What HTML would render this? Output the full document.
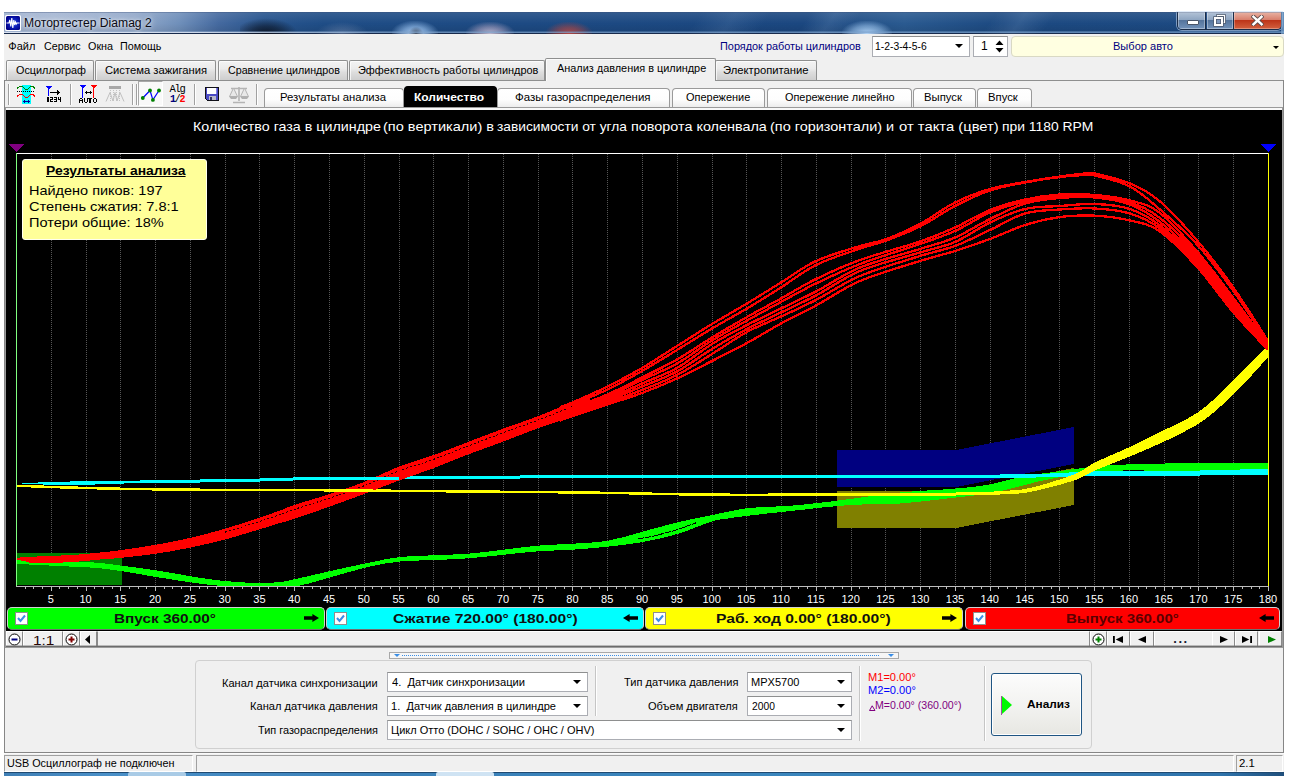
<!DOCTYPE html>
<html><head><meta charset="utf-8"><title>Мотортестер Diamag 2</title>
<style>
*{box-sizing:border-box;margin:0;padding:0}
html,body{width:1296px;height:776px;overflow:hidden;background:#fff}
body{position:relative;font-family:"Liberation Sans",sans-serif;font-size:11px;color:#000}
.abs{position:absolute}
#win{position:absolute;left:4px;top:12px;width:1280px;height:760px;background:#f0f0f0}
#title{position:absolute;left:4px;top:12px;width:1280px;height:22px;
 background:linear-gradient(90deg,#9fb1cf 0px,#a6b7d3 50px,#93a9ca 130px,#6f8fba 175px,#44699f 215px,#28558e 260px,#1f4d86 320px,#1d4a83 520px,#1b4780 800px,#2a5a90 900px,#1c4981 1000px,#1d4a82 1280px);border-bottom:1px solid #172a4c}
#title .glow{position:absolute;left:0;top:0;width:100%;height:100%;background:linear-gradient(180deg,rgba(255,255,255,.10) 0,rgba(255,255,255,0) 55%,rgba(0,0,0,.10) 100%)}
#ttext{position:absolute;left:21px;top:3px;font-size:12.5px;color:#0a0a14;white-space:nowrap;letter-spacing:.1px;text-shadow:0 0 6px rgba(255,255,255,.9),0 0 3px rgba(255,255,255,.7)}
.menu{position:absolute;top:40px;font-size:11px;white-space:nowrap;color:#000}
.tab{position:absolute;top:60px;height:20px;border:1px solid #8e8f8f;border-bottom:none;border-radius:2px 2px 0 0;box-shadow:inset 1px 1px 0 rgba(255,255,255,.7);
 background:linear-gradient(180deg,#f3f3f3 0,#ebebeb 40%,#dddddd 60%,#cecece 100%);font-size:12px;text-align:center;line-height:18px;white-space:nowrap}
.tab.sel{top:58px;height:23px;background:#f0f0f0;line-height:20px;z-index:3}
.itab{position:absolute;top:88px;height:19px;border:1px solid #9a9a9a;border-bottom:none;border-radius:4px 4px 0 0;
 background:linear-gradient(180deg,#fff 0,#fdfdfd 60%,#ededed 100%);font-size:12px;text-align:center;line-height:18px;white-space:nowrap}
.itab.sel{top:86px;height:21px;background:#000;color:#fff;font-weight:bold;border-color:#000;line-height:20px;font-size:12px}
.tsep{position:absolute;top:84px;width:2px;height:21px;border-left:1px solid #a0a0a0;border-right:1px solid #fff}
.tl{position:absolute;top:593px;width:30px;text-align:center;font-size:11px;color:#fff;line-height:12px}
.bar{position:absolute;top:607px;height:23px;border-radius:5px;border:1px solid #d0d0d0;border-bottom-color:#707070;font-weight:bold;font-size:14px;text-align:center;line-height:20px;white-space:nowrap;color:#101010}
.cb{position:absolute;top:4px;left:7px;width:13px;height:13px;background:#fff;border:1px solid #8e8f8f;line-height:0;font-size:0}.cb svg{display:block}
.arr{position:absolute;top:4px}
.sb{position:absolute;top:631px;height:16px;background:#f0f0f0;border:1px solid;border-color:#fff #8a8a8a #8a8a8a #fff}
.combo{position:absolute;height:20px;background:#fff;border:1px solid #abadb3;border-top-color:#8e8f8f;font-size:11px;line-height:17px;padding-left:4px;white-space:nowrap;overflow:hidden}
.combo:after{content:"";position:absolute;right:6px;top:7px;border:4px solid transparent;border-top:4px solid #000;border-bottom:none}
.lbl{position:absolute;font-size:11px;white-space:nowrap;text-align:right}
.vsep{position:absolute;width:2px;border-left:1px solid #c5c5c5;border-right:1px solid #fff}
</style></head><body>
<div id="win"></div>
<!-- title bar -->
<div id="title"><div class="glow"></div>
 <svg class="abs" style="left:0.500px;top:3px" width="16" height="16" viewBox="0 0 16 16"><rect x="0" y="0" width="16" height="16" rx="1.5" fill="#fff"/><defs><radialGradient id="ig" cx="55%" cy="50%" r="60%"><stop offset="0" stop-color="#2a4ae0"/><stop offset="0.6" stop-color="#0a18b0"/><stop offset="1" stop-color="#000088"/></radialGradient></defs><rect x="1" y="1" width="14" height="14" rx="1.500" fill="url(#ig)"/><path d="M1.5,8 H4 L4.8,5 L5.8,11.5 L6.8,3 L7.8,13 L8.8,5 L9.7,10 L10.5,7 L11.3,9 L12,8 H14.5" fill="none" stroke="#fff" stroke-width="1.1"/></svg>
 
 <!-- background blurred shapes -->
 <div class="abs" style="left:236px;top:6px;width:58px;height:16px;background:radial-gradient(ellipse at 45% 100%,rgba(8,12,22,.85) 0,rgba(8,12,22,.5) 35%,rgba(8,12,22,0) 70%)"></div>
 <div class="abs" style="left:312px;top:10px;width:52px;height:12px;background:radial-gradient(ellipse at 50% 100%,rgba(120,140,175,.55) 0,rgba(120,140,175,0) 72%)"></div>
 <div class="abs" style="left:388px;top:9px;width:46px;height:13px;background:radial-gradient(ellipse at 50% 100%,rgba(185,215,250,.95) 0,rgba(160,200,245,.6) 40%,rgba(160,200,245,0) 75%)"></div>
 <div class="abs" style="left:405px;top:15px;width:14px;height:7px;background:radial-gradient(ellipse at 50% 100%,rgba(20,25,40,.7) 0,rgba(20,25,40,0) 75%)"></div>
 <div class="abs" style="left:462px;top:10px;width:48px;height:12px;background:radial-gradient(ellipse at 50% 100%,rgba(215,205,225,.85) 0,rgba(200,180,205,.5) 40%,rgba(200,180,205,0) 75%)"></div>
 <div class="abs" style="left:542px;top:10px;width:46px;height:12px;background:radial-gradient(ellipse at 50% 100%,rgba(205,75,65,.85) 0,rgba(190,70,60,.5) 40%,rgba(190,70,60,0) 75%)"></div>
 <div class="abs" style="left:838px;top:9px;width:50px;height:13px;background:radial-gradient(ellipse at 50% 100%,rgba(185,220,255,.95) 0,rgba(170,210,250,.5) 45%,rgba(180,215,255,0) 75%)"></div>
 <div class="abs" style="left:985px;top:0;width:60px;height:22px;transform:skewX(-35deg);background:linear-gradient(90deg,rgba(255,255,255,0),rgba(160,190,225,.16) 50%,rgba(255,255,255,0))"></div>
 <div class="abs" style="left:690px;top:0;width:70px;height:22px;transform:skewX(-35deg);background:linear-gradient(90deg,rgba(255,255,255,0),rgba(160,190,225,.12) 50%,rgba(255,255,255,0))"></div>
 <div class="abs" style="left:800px;top:0;width:50px;height:22px;transform:skewX(-35deg);background:linear-gradient(90deg,rgba(255,255,255,0),rgba(160,190,225,.14) 50%,rgba(255,255,255,0))"></div>
 <!-- window buttons -->
 <div class="abs" style="left:1173px;top:0;width:105px;height:18px;border:1px solid #1a2c48;border-top:none;border-radius:0 0 5px 5px;overflow:hidden;box-shadow:0 0 0 1px rgba(200,220,245,.55)">
  <div class="abs" style="left:0;top:0;width:28px;height:17px;background:linear-gradient(180deg,#b4c4d8 0,#8fa6c2 45%,#55749c 50%,#7292ba 100%);border-right:1px solid #1a2c48;box-shadow:inset 0 0 0 1px rgba(255,255,255,.35)"></div>
  <div class="abs" style="left:29px;top:0;width:27px;height:17px;background:linear-gradient(180deg,#b4c4d8 0,#8fa6c2 45%,#55749c 50%,#7292ba 100%);border-right:1px solid #1a2c48;box-shadow:inset 0 0 0 1px rgba(255,255,255,.35)"></div>
  <div class="abs" style="left:56px;top:0;width:48px;height:17px;background:linear-gradient(180deg,#e9b4a6 0,#d8806e 45%,#bd3519 50%,#d3613f 100%);box-shadow:inset 0 0 0 1px rgba(255,255,255,.3)"></div>
  <div class="abs" style="left:9px;top:8px;width:12px;height:5px;background:#fff;border:1px solid #4a5568;border-radius:1px"></div>
  <svg class="abs" style="left:35px;top:2px" width="13" height="13" viewBox="0 0 13 13"><rect x="4.500" y="1.5" width="7" height="7" fill="none" stroke="#4a5568" stroke-width="2.6"/><rect x="4.500" y="1.5" width="7" height="7" fill="none" stroke="#fff" stroke-width="1.2"/><rect x="2" y="4" width="7" height="7" fill="#7e98bd" stroke="#4a5568" stroke-width="3.4"/><rect x="2" y="4" width="7" height="7" fill="none" stroke="#fff" stroke-width="2"/></svg>
  <svg class="abs" style="left:73px;top:3px" width="13" height="11" viewBox="0 0 13 11"><path d="M2.500,1.800 L10.500,9.200 M10.500,1.800 L2.500,9.200" stroke="#5a4a4a" stroke-width="4.200" stroke-linecap="square"/><path d="M2.500,1.800 L10.500,9.200 M10.500,1.800 L2.500,9.200" stroke="#fff" stroke-width="2.500" stroke-linecap="square"/></svg>
 </div>
 <div class="abs" style="left:0;top:19px;width:1280px;height:1px;background:linear-gradient(90deg,rgba(170,190,220,.5),rgba(110,150,195,.35) 40%,rgba(120,160,205,.5))"></div><div class="abs" style="left:0;top:20px;width:1280px;height:1px;background:linear-gradient(90deg,rgba(225,232,245,.9),rgba(215,225,242,.9) 15%,rgba(130,165,205,.7) 30%,rgba(120,160,205,.7))"></div><div class="abs" style="left:0;top:0;width:1280px;height:1px;background:rgba(60,80,120,.35)"></div>
 <div class="abs" style="left:1277px;top:0;width:3px;height:22px;background:rgba(130,170,210,.7)"></div>
</div>
<!-- menu -->
<span style="position:absolute;white-space:nowrap;display:inline-block;transform-origin:0 50%;transform:scaleX(0.9859);left:24.41px;top:14.5px;font-size:12.3px;line-height:16px;letter-spacing:0.000px;color:#0a0a14;text-shadow:0 0 6px rgba(255,255,255,.9),0 0 3px rgba(255,255,255,.7);z-index:5">Мотортестер Diamag 2</span>
<span style="position:absolute;white-space:nowrap;display:inline-block;transform-origin:0 50%;transform:scaleX(1.0000);left:8.30px;top:39.1px;font-size:11px;line-height:15px;letter-spacing:0.000px;">Файл</span>
<span style="position:absolute;white-space:nowrap;display:inline-block;transform-origin:0 50%;transform:scaleX(0.9730);left:43.50px;top:39.1px;font-size:11px;line-height:15px;letter-spacing:0.000px;">Сервис</span>
<span style="position:absolute;white-space:nowrap;display:inline-block;transform-origin:0 50%;transform:scaleX(0.9808);left:87.50px;top:39.1px;font-size:11px;line-height:15px;letter-spacing:0.000px;">Окна</span>
<span style="position:absolute;white-space:nowrap;display:inline-block;transform-origin:0 50%;transform:scaleX(0.9756);left:120.02px;top:39.1px;font-size:11px;line-height:15px;letter-spacing:0.000px;">Помощь</span>
<span style="position:absolute;white-space:nowrap;display:inline-block;transform-origin:0 50%;transform:scaleX(0.9894);left:719.51px;top:39.1px;font-size:11px;line-height:15px;letter-spacing:0.000px;color:#000080;">Порядок работы цилиндров</span>
<div class="combo" style="left:872px;top:36px;width:98px;height:21px"></div><span style="position:absolute;white-space:nowrap;display:inline-block;transform-origin:0 50%;transform:scaleX(0.9398);left:874.56px;top:39.1px;font-size:11px;line-height:15px;letter-spacing:0.000px;">1-2-3-4-5-6</span>
<div class="abs" style="left:973px;top:36px;width:35px;height:21px;background:#fff;border:1px solid #abadb3;border-top-color:#8e8f8f;font-size:12px;line-height:18px;padding-left:7px">
 <svg class="abs" style="left:21px;top:2px" width="9" height="15" viewBox="0 0 9 15"><path d="M0.5,6 L4.5,1.5 L8.5,6 Z M0.5,9 L4.5,13.5 L8.5,9 Z" fill="#000"/></svg></div>
<div class="abs" style="left:1011px;top:36px;width:273px;height:21px;background:#ffffe1;border:1px solid #d9d9c4;border-radius:4px">
 <div class="abs" style="right:4px;top:9px;border:3px solid transparent;border-top:3px solid #000;border-bottom:none"></div></div>

<span class="abs" style="left:981px;top:38px;font-size:12px;line-height:16px">1</span>
<span style="position:absolute;white-space:nowrap;display:inline-block;transform-origin:0 50%;transform:scaleX(1.0043);left:1112.75px;top:39.1px;font-size:11px;line-height:15px;letter-spacing:-0.000px;color:#000080;">Выбор авто</span>
<!-- main tabs -->
<div class="abs" style="left:4px;top:80px;width:1280px;height:1px;background:#8e8f8f;z-index:2"></div>
<div class="abs" style="left:1282px;top:108px;width:1px;height:540px;background:#9a9a9a;z-index:6"></div><div class="abs" style="left:1283px;top:80px;width:1px;height:673px;background:#868686;z-index:6"></div>
<div class="abs" style="left:4px;top:80px;width:1px;height:673px;background:#868686;z-index:6"></div><div class="abs" style="left:5px;top:108px;width:1px;height:540px;background:#9a9a9a;z-index:6"></div>
<div class="tab" style="left:6px;width:88px"></div><span style="position:absolute;white-space:nowrap;display:inline-block;transform-origin:0 50%;transform:scaleX(0.9857);left:16.00px;top:62.8px;font-size:11px;line-height:15px;letter-spacing:0.000px;color:#000;z-index:4">Осциллограф</span>
<div class="tab" style="left:95px;width:121px"></div><span style="position:absolute;white-space:nowrap;display:inline-block;transform-origin:0 50%;transform:scaleX(1.0200);left:105.00px;top:62.8px;font-size:11px;line-height:15px;letter-spacing:0.000px;color:#000;z-index:4">Система зажигания</span>
<div class="tab" style="left:218px;width:130px"></div><span style="position:absolute;white-space:nowrap;display:inline-block;transform-origin:0 50%;transform:scaleX(0.9717);left:227.50px;top:62.8px;font-size:11px;line-height:15px;letter-spacing:0.000px;color:#000;z-index:4">Сравнение цилиндров</span>
<div class="tab" style="left:349px;width:196px"></div><span style="position:absolute;white-space:nowrap;display:inline-block;transform-origin:0 50%;transform:scaleX(0.9931);left:357.76px;top:62.8px;font-size:11px;line-height:15px;letter-spacing:0.000px;color:#000;z-index:4">Эффективность работы цилиндров</span>
<div class="tab sel" style="left:545px;width:171px"></div><span style="position:absolute;white-space:nowrap;display:inline-block;transform-origin:0 50%;transform:scaleX(0.9900);left:557.00px;top:60.6px;font-size:11px;line-height:15px;letter-spacing:0.000px;color:#000;z-index:4">Анализ давления в цилиндре</span>
<div class="tab" style="left:715px;width:102px"></div><span style="position:absolute;white-space:nowrap;display:inline-block;transform-origin:0 50%;transform:scaleX(1.0213);left:722.73px;top:62.8px;font-size:11px;line-height:15px;letter-spacing:0.000px;color:#000;z-index:4">Электропитание</span>

<!-- toolbar -->
<div id="toolbar">
<div class="tsep" style="left:8px"></div>
<div class="tsep" style="left:70px"></div>
<div class="tsep" style="left:132px"></div>
<div class="tsep" style="left:136px"></div>
<div class="tsep" style="left:194px"></div>
<div class="tsep" style="left:256px"></div>
<div class="abs" style="left:138px;top:81px;width:25px;height:25px;background:#f9f9f9;border:1px solid;border-color:#a8a8a8 #fff #fff #a8a8a8"></div>
<svg class="abs" style="left:6px;top:81px" width="256" height="26" viewBox="6 81 256 26">
<g shape-rendering="crispEdges">
<!-- icon1 -->
<rect x="22" y="85" width="9" height="19" fill="#00ffff"/>
<path d="M17,88.500 L19.500,86.500 L22.500,86.500 L25.500,89.500 L27.500,89.500 L30.500,86.500 L33,86.500 L35,88.500" fill="none" stroke="#008000" stroke-width="1"/>
<path d="M17,96.500 L19.500,94.500 L22.500,94.500 L25.500,97.500 L27.500,97.500 L30.500,94.500 L33,94.500 L35,96.500" fill="none" stroke="#ff0000" stroke-width="1"/>
<path d="M17,91.500 H35" stroke="#000" stroke-width="1" stroke-dasharray="1,1"/>
<path d="M23,101.500 H30" stroke="#0000a0" stroke-width="1"/><path d="M24.500,100 V103 M28.500,100 V103 M23.500,101 V102 M29.500,101 V102" stroke="#0000a0" stroke-width="1"/>
<!-- icon2 -->
<polygon points="45,86 52,86 48.500,89.500" fill="#0000ff"/><rect x="48" y="86" width="1" height="10" fill="#0000ff"/>
<rect x="50" y="92" width="9" height="1" fill="#000"/><polygon points="57,90 60,92.500 57,95" fill="#000"/>
<rect x="46.60" y="97.00" width="2.00" height="1" fill="#000"/><rect x="46.60" y="98.00" width="2.00" height="1" fill="#000"/><rect x="46.60" y="99.00" width="2.00" height="1" fill="#000"/><rect x="46.60" y="100.00" width="2.00" height="1" fill="#000"/><rect x="46.60" y="101.00" width="2.00" height="1" fill="#000"/><rect x="49.60" y="97.00" width="3.00" height="1" fill="#000"/><rect x="51.60" y="98.00" width="1.00" height="1" fill="#000"/><rect x="49.60" y="99.00" width="3.00" height="1" fill="#000"/><rect x="49.60" y="100.00" width="1.00" height="1" fill="#000"/><rect x="49.60" y="101.00" width="3.00" height="1" fill="#000"/><rect x="53.60" y="97.00" width="3.00" height="1" fill="#000"/><rect x="55.60" y="98.00" width="1.00" height="1" fill="#000"/><rect x="53.60" y="99.00" width="3.00" height="1" fill="#000"/><rect x="55.60" y="100.00" width="1.00" height="1" fill="#000"/><rect x="53.60" y="101.00" width="3.00" height="1" fill="#000"/><rect x="57.60" y="97.00" width="1.00" height="1" fill="#000"/><rect x="59.60" y="97.00" width="1.00" height="1" fill="#000"/><rect x="57.60" y="98.00" width="1.00" height="1" fill="#000"/><rect x="59.60" y="98.00" width="1.00" height="1" fill="#000"/><rect x="57.60" y="99.00" width="3.00" height="1" fill="#000"/><rect x="59.60" y="100.00" width="1.00" height="1" fill="#000"/><rect x="59.60" y="101.00" width="1.00" height="1" fill="#000"/>
<!-- icon3 -->
<polygon points="79,85 86,85 82.500,88.500" fill="#0000ff"/><rect x="82" y="85" width="1" height="13" fill="#0000ff"/>
<polygon points="90,85 97,85 93.500,88.500" fill="#ff0000"/><rect x="93" y="85" width="1" height="13" fill="#ff0000"/>
<rect x="85" y="92" width="7" height="1" fill="#000"/><path d="M86,91 V94 M85,92 V93 M90.500,91 V94" stroke="#000" stroke-width="1"/>
<rect x="79.80" y="98.00" width="2.00" height="1" fill="#000"/><rect x="78.80" y="99.00" width="1.00" height="1" fill="#000"/><rect x="81.80" y="99.00" width="1.00" height="1" fill="#000"/><rect x="78.80" y="100.00" width="4.00" height="1" fill="#000"/><rect x="78.80" y="101.00" width="1.00" height="1" fill="#000"/><rect x="81.80" y="101.00" width="1.00" height="1" fill="#000"/><rect x="78.80" y="102.00" width="1.00" height="1" fill="#000"/><rect x="81.80" y="102.00" width="1.00" height="1" fill="#000"/><rect x="83.50" y="98.00" width="1.00" height="1" fill="#000"/><rect x="86.50" y="98.00" width="1.00" height="1" fill="#000"/><rect x="83.50" y="99.00" width="1.00" height="1" fill="#000"/><rect x="86.50" y="99.00" width="1.00" height="1" fill="#000"/><rect x="83.50" y="100.00" width="1.00" height="1" fill="#000"/><rect x="86.50" y="100.00" width="1.00" height="1" fill="#000"/><rect x="83.50" y="101.00" width="1.00" height="1" fill="#000"/><rect x="86.50" y="101.00" width="1.00" height="1" fill="#000"/><rect x="84.50" y="102.00" width="2.00" height="1" fill="#000"/><rect x="88.20" y="98.00" width="4.00" height="1" fill="#000"/><rect x="89.20" y="99.00" width="2.00" height="1" fill="#000"/><rect x="89.20" y="100.00" width="2.00" height="1" fill="#000"/><rect x="89.20" y="101.00" width="2.00" height="1" fill="#000"/><rect x="89.20" y="102.00" width="2.00" height="1" fill="#000"/><rect x="93.90" y="98.00" width="2.00" height="1" fill="#000"/><rect x="92.90" y="99.00" width="1.00" height="1" fill="#000"/><rect x="95.90" y="99.00" width="1.00" height="1" fill="#000"/><rect x="92.90" y="100.00" width="1.00" height="1" fill="#000"/><rect x="95.90" y="100.00" width="1.00" height="1" fill="#000"/><rect x="92.90" y="101.00" width="1.00" height="1" fill="#000"/><rect x="95.90" y="101.00" width="1.00" height="1" fill="#000"/><rect x="93.90" y="102.00" width="2.00" height="1" fill="#000"/>
<!-- icon4 -->
<rect x="109" y="86" width="12" height="3" fill="#a8a8a8"/>
</g>
<path d="M106,101.500 L110,92.500 L113,101 L115,92.500 L117,101 L120,92.500 L124,101.500" fill="none" stroke="#c0c0c0" stroke-width="1"/>
<path d="M110.500,90 V101 M113.500,90 V101 M116.500,90 V101 M119.500,90 V101" stroke="#c4c4c4" stroke-width="1" stroke-dasharray="1,1"/>
<!-- icon5 zigzag -->
<path d="M142.800,98 L150,90.500 L152.900,99.900 L159,90.500" fill="none" stroke="#0000ff" stroke-width="1.2"/>
<circle cx="142.800" cy="98" r="1.900" fill="#008000"/><circle cx="150" cy="90.500" r="1.900" fill="#008000"/><circle cx="152.900" cy="99.900" r="1.900" fill="#008000"/><circle cx="159" cy="90.500" r="1.900" fill="#008000"/>
<!-- icon7 floppy -->
<g shape-rendering="crispEdges">
<path d="M205,87 H219 V101 H207 L205,99 Z" fill="#101018"/>
<path d="M206,88 H218 V100 H207.500 L206,98.500 Z" fill="#4a4ac4"/>
<rect x="207" y="88" width="9" height="6" fill="#fff"/>
<rect x="216" y="88" width="1" height="6" fill="#8080e0"/>
<rect x="209" y="96" width="7" height="4" fill="#b8b8c8"/><rect x="210" y="97" width="2" height="3" fill="#303060"/>
</g>
<!-- icon8 scales -->
<path d="M239,87 V101 M233,102.500 H245 M231,88.500 H247" stroke="#b4b4b4" stroke-width="1.6" fill="none"/>
<path d="M233.500,88 L229.500,96.500 H237.500 Z M244.500,88 L240.500,96.500 H248.500 Z" fill="#e8e8e8" stroke="#b4b4b4" stroke-width="1"/>
<path d="M229,96.500 H238 L236,99 H231 Z M240,96.500 H249 L247,99 H242 Z" fill="#b0b0b0"/>
</svg>
<!-- icon6 Alg 1/2 -->
<div class="abs" style="left:169.500px;top:84px;font-family:'Liberation Mono',monospace;font-size:10.5px;line-height:11px;letter-spacing:-1.3px;white-space:nowrap;color:#000">Alg</div>
<div class="abs" style="left:170px;top:94px;font-family:'Liberation Mono',monospace;font-size:10px;line-height:11px;letter-spacing:-1.300px;white-space:nowrap;color:#000;font-weight:bold"><span style="color:#000080">1</span><span style="font-weight:normal">/</span><span style="color:#ff0000">2</span></div>
</div>

<!-- inner tabs -->
<div class="abs" style="left:5px;top:107px;width:1278px;height:1px;background:#9a9a9a"></div>
<div class="abs" style="left:5px;top:108px;width:1278px;height:2px;background:#f8f8f8"></div>
<div class="itab" style="left:264px;width:140px"></div><span style="position:absolute;white-space:nowrap;display:inline-block;transform-origin:0 50%;transform:scaleX(1.0294);left:280.22px;top:90.3px;font-size:11px;line-height:15px;letter-spacing:0.000px;">Результаты анализа</span>
<div class="itab sel" style="left:404px;width:93px"></div><span style="position:absolute;white-space:nowrap;display:inline-block;transform-origin:0 50%;transform:scaleX(1.0913);left:414.41px;top:89.5px;font-size:11px;line-height:15px;letter-spacing:0.000px;font-weight:bold;color:#fff;">Количество</span>
<div class="itab" style="left:497px;width:173px"></div><span style="position:absolute;white-space:nowrap;display:inline-block;transform-origin:0 50%;transform:scaleX(1.0449);left:515.21px;top:90.3px;font-size:11px;line-height:15px;letter-spacing:0.000px;">Фазы газораспределения</span>
<div class="itab" style="left:672px;width:93px"></div><span style="position:absolute;white-space:nowrap;display:inline-block;transform-origin:0 50%;transform:scaleX(0.9961);left:686.25px;top:90.3px;font-size:11px;line-height:15px;letter-spacing:0.000px;">Опережение</span>
<div class="itab" style="left:767px;width:145px"></div><span style="position:absolute;white-space:nowrap;display:inline-block;transform-origin:0 50%;transform:scaleX(0.9886);left:784.50px;top:90.3px;font-size:11px;line-height:15px;letter-spacing:0.000px;">Опережение линейно</span>
<div class="itab" style="left:913px;width:63px"></div><span style="position:absolute;white-space:nowrap;display:inline-block;transform-origin:0 50%;transform:scaleX(1.0278);left:924.47px;top:90.3px;font-size:11px;line-height:15px;letter-spacing:0.000px;">Выпуск</span>
<div class="itab" style="left:977px;width:55px"></div><span style="position:absolute;white-space:nowrap;display:inline-block;transform-origin:0 50%;transform:scaleX(1.0268);left:987.72px;top:90.3px;font-size:11px;line-height:15px;letter-spacing:0.000px;">Впуск</span>

<!-- chart frame -->

<svg id="chart" width="1276" height="521" viewBox="6 110 1276 521" style="position:absolute;left:6px;top:110px" shape-rendering="crispEdges">
<rect x="6" y="110" width="1276" height="521" fill="#000"/>
<line x1="51.5" y1="154" x2="51.5" y2="586" stroke="#565656" stroke-width="1" stroke-dasharray="1,1"/>
<line x1="86.5" y1="154" x2="86.5" y2="586" stroke="#565656" stroke-width="1" stroke-dasharray="1,1"/>
<line x1="120.5" y1="154" x2="120.5" y2="586" stroke="#565656" stroke-width="1" stroke-dasharray="1,1"/>
<line x1="155.5" y1="154" x2="155.5" y2="586" stroke="#565656" stroke-width="1" stroke-dasharray="1,1"/>
<line x1="190.5" y1="154" x2="190.5" y2="586" stroke="#565656" stroke-width="1" stroke-dasharray="1,1"/>
<line x1="225.5" y1="154" x2="225.5" y2="586" stroke="#565656" stroke-width="1" stroke-dasharray="1,1"/>
<line x1="259.5" y1="154" x2="259.5" y2="586" stroke="#565656" stroke-width="1" stroke-dasharray="1,1"/>
<line x1="294.5" y1="154" x2="294.5" y2="586" stroke="#565656" stroke-width="1" stroke-dasharray="1,1"/>
<line x1="329.5" y1="154" x2="329.5" y2="586" stroke="#565656" stroke-width="1" stroke-dasharray="1,1"/>
<line x1="364.5" y1="154" x2="364.5" y2="586" stroke="#565656" stroke-width="1" stroke-dasharray="1,1"/>
<line x1="399.5" y1="154" x2="399.5" y2="586" stroke="#565656" stroke-width="1" stroke-dasharray="1,1"/>
<line x1="433.5" y1="154" x2="433.5" y2="586" stroke="#565656" stroke-width="1" stroke-dasharray="1,1"/>
<line x1="468.5" y1="154" x2="468.5" y2="586" stroke="#565656" stroke-width="1" stroke-dasharray="1,1"/>
<line x1="503.5" y1="154" x2="503.5" y2="586" stroke="#565656" stroke-width="1" stroke-dasharray="1,1"/>
<line x1="538.5" y1="154" x2="538.5" y2="586" stroke="#565656" stroke-width="1" stroke-dasharray="1,1"/>
<line x1="572.5" y1="154" x2="572.5" y2="586" stroke="#565656" stroke-width="1" stroke-dasharray="1,1"/>
<line x1="607.5" y1="154" x2="607.5" y2="586" stroke="#565656" stroke-width="1" stroke-dasharray="1,1"/>
<line x1="642.5" y1="154" x2="642.5" y2="586" stroke="#565656" stroke-width="1" stroke-dasharray="1,1"/>
<line x1="677.5" y1="154" x2="677.5" y2="586" stroke="#565656" stroke-width="1" stroke-dasharray="1,1"/>
<line x1="712.5" y1="154" x2="712.5" y2="586" stroke="#565656" stroke-width="1" stroke-dasharray="1,1"/>
<line x1="746.5" y1="154" x2="746.5" y2="586" stroke="#565656" stroke-width="1" stroke-dasharray="1,1"/>
<line x1="781.5" y1="154" x2="781.5" y2="586" stroke="#565656" stroke-width="1" stroke-dasharray="1,1"/>
<line x1="816.5" y1="154" x2="816.5" y2="586" stroke="#565656" stroke-width="1" stroke-dasharray="1,1"/>
<line x1="851.5" y1="154" x2="851.5" y2="586" stroke="#565656" stroke-width="1" stroke-dasharray="1,1"/>
<line x1="885.5" y1="154" x2="885.5" y2="586" stroke="#565656" stroke-width="1" stroke-dasharray="1,1"/>
<line x1="920.5" y1="154" x2="920.5" y2="586" stroke="#565656" stroke-width="1" stroke-dasharray="1,1"/>
<line x1="955.5" y1="154" x2="955.5" y2="586" stroke="#565656" stroke-width="1" stroke-dasharray="1,1"/>
<line x1="990.5" y1="154" x2="990.5" y2="586" stroke="#565656" stroke-width="1" stroke-dasharray="1,1"/>
<line x1="1025.5" y1="154" x2="1025.5" y2="586" stroke="#565656" stroke-width="1" stroke-dasharray="1,1"/>
<line x1="1059.5" y1="154" x2="1059.5" y2="586" stroke="#565656" stroke-width="1" stroke-dasharray="1,1"/>
<line x1="1094.5" y1="154" x2="1094.5" y2="586" stroke="#565656" stroke-width="1" stroke-dasharray="1,1"/>
<line x1="1129.5" y1="154" x2="1129.5" y2="586" stroke="#565656" stroke-width="1" stroke-dasharray="1,1"/>
<line x1="1164.5" y1="154" x2="1164.5" y2="586" stroke="#565656" stroke-width="1" stroke-dasharray="1,1"/>
<line x1="1198.5" y1="154" x2="1198.5" y2="586" stroke="#565656" stroke-width="1" stroke-dasharray="1,1"/>
<line x1="1233.5" y1="154" x2="1233.5" y2="586" stroke="#565656" stroke-width="1" stroke-dasharray="1,1"/>
<rect x="17" y="553" width="105" height="32" fill="#008000"/>
<polygon points="837,450 956,450 1074,427 1074,464 956,487 837,487" fill="#000080"/>
<polygon points="837,491 956,491 1074,468 1074,505 956,528 837,528" fill="#808000"/>
<path d="M17.0,559.0 C24.2,559.2 46.2,559.8 60.0,560.5 C73.8,561.2 89.7,562.1 100.0,563.0 C110.3,563.9 112.7,564.6 122.0,565.8 C131.3,567.0 142.6,568.3 155.6,570.3 C168.6,572.3 188.4,576.0 200.0,577.8 C211.6,579.6 215.8,580.1 225.0,581.0 C234.2,581.9 245.8,582.8 255.0,583.0 C264.2,583.2 272.5,582.8 280.0,582.0 C287.5,581.2 290.8,580.0 300.0,578.0 C309.2,576.0 323.3,572.6 335.0,570.0 C346.7,567.4 359.2,564.7 370.0,562.5 C380.8,560.3 389.4,558.2 400.0,557.0 C410.6,555.8 422.1,555.8 433.5,555.3 C444.9,554.8 456.8,554.6 468.4,553.7 C480.0,552.8 491.8,551.1 503.4,549.7 C515.0,548.4 526.8,546.6 538.3,545.6 C549.8,544.6 560.9,544.5 572.4,543.7 C583.9,542.9 595.8,542.9 607.5,540.9 C619.2,538.9 630.9,534.8 642.5,531.7 C654.1,528.6 665.8,525.2 677.4,522.4 C689.0,519.6 703.6,516.9 712.4,515.0 C721.2,513.1 723.7,512.5 730.0,511.3 C736.3,510.1 738.3,509.1 750.0,508.0 C761.7,506.9 783.3,506.5 800.0,505.0 C816.7,503.5 833.3,501.1 850.0,499.0 C866.7,496.9 882.3,494.2 900.0,492.5 C917.7,490.8 940.9,489.9 956.0,488.5 C971.1,487.1 979.7,486.3 990.4,484.4 C1001.1,482.5 1010.1,479.0 1020.0,477.0 C1029.9,475.0 1036.7,474.3 1050.0,472.5 C1063.3,470.7 1084.3,467.4 1100.0,466.0 C1115.7,464.6 1127.3,464.5 1144.0,464.0 C1160.7,463.5 1179.3,463.2 1200.0,463.0 C1220.7,462.8 1256.7,463.0 1268.0,463.0 L1268.0,471.0 C1256.7,471.1 1220.7,471.6 1200.0,471.5 C1179.3,471.4 1160.7,470.5 1144.0,470.5 C1127.3,470.5 1115.7,470.1 1100.0,471.5 C1084.3,472.9 1063.3,476.5 1050.0,479.0 C1036.7,481.5 1029.9,483.9 1020.0,486.3 C1010.1,488.7 1001.1,491.3 990.4,493.2 C979.7,495.1 971.1,495.8 956.0,497.5 C940.9,499.2 917.7,502.2 900.0,503.5 C882.3,504.8 866.7,503.9 850.0,505.0 C833.3,506.1 816.7,508.2 800.0,510.0 C783.3,511.8 761.7,514.1 750.0,515.5 C738.3,516.9 736.3,517.2 730.0,518.2 C723.7,519.2 721.2,518.7 712.4,521.3 C703.6,523.9 689.0,530.5 677.4,534.0 C665.8,537.5 654.1,540.0 642.5,542.1 C630.9,544.2 619.2,545.4 607.5,546.7 C595.8,548.0 583.9,548.9 572.4,549.7 C560.9,550.5 549.8,550.4 538.3,551.3 C526.8,552.1 515.0,553.6 503.4,554.8 C491.8,556.0 480.0,557.4 468.4,558.3 C456.8,559.2 444.9,559.6 433.5,560.1 C422.1,560.6 410.6,560.4 400.0,561.5 C389.4,562.6 380.8,564.1 370.0,566.5 C359.2,568.9 346.7,572.8 335.0,576.0 C323.3,579.2 309.2,583.8 300.0,585.5 C290.8,587.2 287.5,585.9 280.0,586.0 C272.5,586.1 264.2,586.0 255.0,586.0 C245.8,586.0 234.2,586.4 225.0,586.0 C215.8,585.6 211.6,585.2 200.0,583.7 C188.4,582.2 168.6,579.0 155.6,576.9 C142.6,574.8 131.3,572.6 122.0,571.2 C112.7,569.8 107.0,569.0 100.0,568.3 C93.0,567.6 86.0,567.3 80.0,567.0 C74.0,566.7 70.7,566.6 64.0,566.3 C57.3,566.0 47.8,565.4 40.0,565.0 C32.2,564.6 20.8,564.2 17.0,564.0 Z" fill="#00ff00"/>
<path d="M638,539 L655,535.8 L677,529.8 L696,522.8" fill="none" stroke="#000" stroke-width="1" stroke-dasharray="6,1"/>
<path d="M17.0,558.0 C18.2,557.8 21.7,557.2 24.0,557.0 C26.3,556.8 26.3,557.0 31.0,556.8 C35.7,556.6 45.0,556.1 52.0,555.8 C59.0,555.5 65.0,555.5 73.0,555.0 C81.0,554.5 92.1,553.3 100.0,552.5 C107.9,551.7 111.1,551.5 120.4,550.2 C129.7,548.9 143.9,546.8 155.6,544.8 C167.2,542.8 178.7,540.6 190.3,537.9 C201.9,535.2 213.8,532.0 225.3,528.6 C236.8,525.2 250.3,520.8 259.4,517.8 C268.5,514.8 274.2,512.6 280.0,510.5 C285.8,508.4 285.7,507.8 294.0,505.0 C302.3,502.2 318.3,497.8 330.0,494.0 C341.7,490.2 352.5,486.6 364.0,482.0 C375.5,477.4 387.3,471.0 399.0,466.5 C410.7,462.0 422.5,459.1 434.0,455.0 C445.5,450.9 456.5,446.4 468.0,442.0 C479.5,437.6 491.3,433.0 503.0,428.7 C514.7,424.4 526.4,420.7 538.0,416.2 C549.6,411.7 563.8,405.5 572.5,401.8 C581.2,398.1 587.1,395.3 590.0,394.0 L590.0,411.0 C587.1,411.9 581.2,413.8 572.5,416.7 C563.8,419.6 549.6,424.1 538.0,428.3 C526.4,432.5 514.7,437.3 503.0,441.7 C491.3,446.1 479.5,450.1 468.0,454.5 C456.5,458.9 445.5,463.7 434.0,468.0 C422.5,472.3 410.7,476.2 399.0,480.5 C387.3,484.8 375.5,489.7 364.0,494.0 C352.5,498.3 341.7,502.3 330.0,506.5 C318.3,510.7 302.3,516.2 294.0,519.0 C285.7,521.8 285.8,521.3 280.0,523.0 C274.2,524.7 268.5,526.7 259.4,529.4 C250.3,532.1 236.8,536.4 225.3,539.4 C213.8,542.4 201.9,545.2 190.3,547.6 C178.7,550.0 167.2,552.1 155.6,553.8 C143.9,555.5 129.7,556.9 120.4,557.9 C111.1,558.9 107.9,558.8 100.0,559.5 C92.1,560.2 81.0,561.5 73.0,562.0 C65.0,562.5 59.0,562.7 52.0,562.8 C45.0,562.9 35.7,563.1 31.0,562.8 C26.3,562.5 26.3,561.5 24.0,561.0 C21.7,560.5 18.2,560.2 17.0,560.0 Z" fill="#ff0000"/>
<path d="M225.3,532.1 C231.0,530.3 250.3,524.4 259.4,521.5 C268.5,518.6 274.2,516.5 280.0,514.5 C285.8,512.5 285.7,512.2 294.0,509.5 C302.3,506.7 318.3,501.9 330.0,498.0 C341.7,494.1 352.5,490.3 364.0,485.8 C375.5,481.3 387.3,475.4 399.0,471.0 C410.7,466.5 422.5,463.3 434.0,459.2 C445.5,455.0 456.5,450.4 468.0,446.0 C479.5,441.6 491.3,437.2 503.0,432.9 C514.7,428.5 526.4,424.5 538.0,420.1 C549.6,415.7 566.8,408.8 572.5,406.6" fill="none" stroke="#200000" stroke-width="1" stroke-dasharray="2,2"/>
<path d="M22.0,483.5 C22.3,483.4 19.2,483.2 24.0,483.0 C28.8,482.8 40.7,482.4 51.0,482.1 C61.3,481.8 74.5,481.3 86.0,481.1 C97.5,480.9 108.5,481.2 120.0,481.0 C131.5,480.8 141.7,480.4 155.0,480.1 C168.3,479.9 182.5,479.8 200.0,479.5 C217.5,479.2 241.7,478.9 260.0,478.5 C278.3,478.1 286.7,477.5 310.0,477.2 C333.3,476.9 368.3,476.8 400.0,476.5 C431.7,476.2 466.7,475.9 500.0,475.7 C533.3,475.4 550.0,475.1 600.0,475.0 C650.0,474.9 733.3,475.1 800.0,475.0 C866.7,474.9 958.3,474.8 1000.0,474.5 C1041.7,474.2 1033.3,474.1 1050.0,473.5 C1066.7,472.9 1081.7,471.5 1100.0,471.0 C1118.3,470.5 1143.3,470.8 1160.0,470.7 C1176.7,470.6 1182.0,470.8 1200.0,470.5 C1218.0,470.2 1256.7,469.0 1268.0,468.7 L1268.0,475.2 C1256.7,475.2 1218.0,475.4 1200.0,475.5 C1182.0,475.6 1176.7,475.8 1160.0,475.8 C1143.3,475.9 1118.3,475.6 1100.0,475.8 C1081.7,476.0 1066.7,476.9 1050.0,477.2 C1033.3,477.5 1041.7,477.6 1000.0,477.7 C958.3,477.8 866.7,477.9 800.0,478.0 C733.3,478.1 650.0,477.9 600.0,478.0 C550.0,478.1 533.3,478.4 500.0,478.7 C466.7,478.9 431.7,479.2 400.0,479.5 C368.3,479.8 333.3,479.9 310.0,480.2 C286.7,480.5 278.3,481.1 260.0,481.5 C241.7,481.9 217.5,482.2 200.0,482.5 C182.5,482.8 168.3,482.8 155.0,483.0 C141.7,483.2 131.5,483.3 120.0,483.6 C108.5,483.9 97.5,484.6 86.0,484.8 C74.5,485.0 61.3,484.7 51.0,484.6 C40.7,484.5 28.8,484.3 24.0,484.2 C19.2,484.1 22.3,484.0 22.0,484.0 Z" fill="#00ffff"/>
<path d="M17.0,484.5 C24.2,484.8 42.8,485.5 60.0,486.0 C77.2,486.5 96.7,487.1 120.0,487.5 C143.3,487.9 166.0,488.2 200.0,488.5 C234.0,488.8 274.0,488.7 324.0,489.0 C374.0,489.3 454.0,490.1 500.0,490.5 C546.0,490.9 561.7,491.0 600.0,491.5 C638.3,492.0 670.7,493.3 730.0,493.5 C789.3,493.7 911.0,492.9 956.0,492.5 C1001.0,492.1 987.7,491.8 1000.0,491.0 C1012.3,490.2 1017.7,490.8 1030.0,488.0 C1042.3,485.2 1063.2,478.7 1074.0,474.5 C1084.8,470.3 1085.4,467.2 1094.6,462.7 C1103.8,458.1 1117.8,452.6 1129.4,447.2 C1141.0,441.8 1155.6,434.2 1164.1,430.1 C1172.6,426.0 1174.8,425.4 1180.6,422.3 C1186.4,419.2 1192.8,415.9 1198.7,411.8 C1204.6,407.7 1210.2,402.8 1216.0,397.5 C1221.8,392.2 1227.6,386.0 1233.3,380.3 C1239.0,374.6 1244.2,368.9 1250.0,363.2 C1255.8,357.5 1265.0,348.9 1268.0,346.0 L1268.0,357.0 C1265.0,360.4 1255.8,371.0 1250.0,377.2 C1244.2,383.4 1239.0,388.8 1233.3,394.3 C1227.6,399.9 1221.8,405.6 1216.0,410.5 C1210.2,415.4 1204.6,420.0 1198.7,423.8 C1192.8,427.6 1186.4,430.5 1180.6,433.5 C1174.8,436.5 1172.6,437.7 1164.1,441.6 C1155.6,445.5 1141.0,451.9 1129.4,456.7 C1117.8,461.5 1103.8,466.7 1094.6,470.7 C1085.4,474.7 1084.8,476.9 1074.0,480.5 C1063.2,484.1 1042.3,489.7 1030.0,492.0 C1017.7,494.3 1012.3,493.9 1000.0,494.5 C987.7,495.1 1001.0,495.2 956.0,495.5 C911.0,495.8 789.3,496.2 730.0,496.0 C670.7,495.8 638.3,494.5 600.0,494.0 C561.7,493.5 546.0,493.4 500.0,493.0 C454.0,492.6 374.0,491.8 324.0,491.5 C274.0,491.2 234.0,491.2 200.0,491.0 C166.0,490.8 143.3,490.4 120.0,490.0 C96.7,489.6 77.2,489.0 60.0,488.5 C42.8,488.0 24.2,487.2 17.0,487.0 Z" fill="#ffff00"/>
<clipPath id="cz1"><rect x="399" y="470" width="80" height="13.500"/></clipPath><clipPath id="cz2"><rect x="373" y="485" width="80" height="10"/></clipPath>
<path d="M17.0,558.0 C18.2,557.8 21.7,557.2 24.0,557.0 C26.3,556.8 26.3,557.0 31.0,556.8 C35.7,556.6 45.0,556.1 52.0,555.8 C59.0,555.5 65.0,555.5 73.0,555.0 C81.0,554.5 92.1,553.3 100.0,552.5 C107.9,551.7 111.1,551.5 120.4,550.2 C129.7,548.9 143.9,546.8 155.6,544.8 C167.2,542.8 178.7,540.6 190.3,537.9 C201.9,535.2 213.8,532.0 225.3,528.6 C236.8,525.2 250.3,520.8 259.4,517.8 C268.5,514.8 274.2,512.6 280.0,510.5 C285.8,508.4 285.7,507.8 294.0,505.0 C302.3,502.2 318.3,497.8 330.0,494.0 C341.7,490.2 352.5,486.6 364.0,482.0 C375.5,477.4 387.3,471.0 399.0,466.5 C410.7,462.0 422.5,459.1 434.0,455.0 C445.5,450.9 456.5,446.4 468.0,442.0 C479.5,437.6 491.3,433.0 503.0,428.7 C514.7,424.4 526.4,420.7 538.0,416.2 C549.6,411.7 563.8,405.5 572.5,401.8 C581.2,398.1 587.1,395.3 590.0,394.0 L590.0,411.0 C587.1,411.9 581.2,413.8 572.5,416.7 C563.8,419.6 549.6,424.1 538.0,428.3 C526.4,432.5 514.7,437.3 503.0,441.7 C491.3,446.1 479.5,450.1 468.0,454.5 C456.5,458.9 445.5,463.7 434.0,468.0 C422.5,472.3 410.7,476.2 399.0,480.5 C387.3,484.8 375.5,489.7 364.0,494.0 C352.5,498.3 341.7,502.3 330.0,506.5 C318.3,510.7 302.3,516.2 294.0,519.0 C285.7,521.8 285.8,521.3 280.0,523.0 C274.2,524.7 268.5,526.7 259.4,529.4 C250.3,532.1 236.8,536.4 225.3,539.4 C213.8,542.4 201.9,545.2 190.3,547.6 C178.7,550.0 167.2,552.1 155.6,553.8 C143.9,555.5 129.7,556.9 120.4,557.9 C111.1,558.9 107.9,558.8 100.0,559.5 C92.1,560.2 81.0,561.5 73.0,562.0 C65.0,562.5 59.0,562.7 52.0,562.8 C45.0,562.9 35.7,563.1 31.0,562.8 C26.3,562.5 26.3,561.5 24.0,561.0 C21.7,560.5 18.2,560.2 17.0,560.0 Z" fill="#ff0000" clip-path="url(#cz1)"/>
<path d="M17.0,558.0 C18.2,557.8 21.7,557.2 24.0,557.0 C26.3,556.8 26.3,557.0 31.0,556.8 C35.7,556.6 45.0,556.1 52.0,555.8 C59.0,555.5 65.0,555.5 73.0,555.0 C81.0,554.5 92.1,553.3 100.0,552.5 C107.9,551.7 111.1,551.5 120.4,550.2 C129.7,548.9 143.9,546.8 155.6,544.8 C167.2,542.8 178.7,540.6 190.3,537.9 C201.9,535.2 213.8,532.0 225.3,528.6 C236.8,525.2 250.3,520.8 259.4,517.8 C268.5,514.8 274.2,512.6 280.0,510.5 C285.8,508.4 285.7,507.8 294.0,505.0 C302.3,502.2 318.3,497.8 330.0,494.0 C341.7,490.2 352.5,486.6 364.0,482.0 C375.5,477.4 387.3,471.0 399.0,466.5 C410.7,462.0 422.5,459.1 434.0,455.0 C445.5,450.9 456.5,446.4 468.0,442.0 C479.5,437.6 491.3,433.0 503.0,428.7 C514.7,424.4 526.4,420.7 538.0,416.2 C549.6,411.7 563.8,405.5 572.5,401.8 C581.2,398.1 587.1,395.3 590.0,394.0 L590.0,411.0 C587.1,411.9 581.2,413.8 572.5,416.7 C563.8,419.6 549.6,424.1 538.0,428.3 C526.4,432.5 514.7,437.3 503.0,441.7 C491.3,446.1 479.5,450.1 468.0,454.5 C456.5,458.9 445.5,463.7 434.0,468.0 C422.5,472.3 410.7,476.2 399.0,480.5 C387.3,484.8 375.5,489.7 364.0,494.0 C352.5,498.3 341.7,502.3 330.0,506.5 C318.3,510.7 302.3,516.2 294.0,519.0 C285.7,521.8 285.8,521.3 280.0,523.0 C274.2,524.7 268.5,526.7 259.4,529.4 C250.3,532.1 236.8,536.4 225.3,539.4 C213.8,542.4 201.9,545.2 190.3,547.6 C178.7,550.0 167.2,552.1 155.6,553.8 C143.9,555.5 129.7,556.9 120.4,557.9 C111.1,558.9 107.9,558.8 100.0,559.5 C92.1,560.2 81.0,561.5 73.0,562.0 C65.0,562.5 59.0,562.7 52.0,562.8 C45.0,562.9 35.7,563.1 31.0,562.8 C26.3,562.5 26.3,561.5 24.0,561.0 C21.7,560.5 18.2,560.2 17.0,560.0 Z" fill="#ff0000" clip-path="url(#cz2)"/>
<path d="M560.0,407.0 C562.1,406.2 564.6,405.9 572.5,402.5 C580.4,399.1 595.9,392.2 607.5,386.5 C619.1,380.8 630.4,374.8 642.0,368.0 C653.6,361.2 665.3,353.3 677.0,346.0 C688.7,338.7 700.3,331.1 712.0,324.0 C723.7,316.9 735.5,310.4 747.0,303.5 C758.5,296.6 769.5,289.6 781.0,282.5 C792.5,275.4 802.8,267.1 816.0,261.0 C829.2,254.9 848.5,249.6 860.0,246.0 C871.5,242.4 875.0,243.2 885.0,239.5 C895.0,235.8 908.3,230.2 920.0,224.0 C931.7,217.8 943.3,208.3 955.0,202.5 C966.7,196.7 978.3,192.4 990.0,189.0 C1001.7,185.6 1013.3,184.1 1025.0,182.0 C1036.7,179.9 1050.0,177.9 1060.0,176.5 C1070.0,175.1 1079.2,174.0 1085.0,173.5 C1090.8,173.0 1087.5,171.8 1095.0,173.5 C1102.5,175.2 1119.2,178.8 1130.0,183.5 C1140.8,188.2 1148.7,191.8 1160.0,201.5 C1171.3,211.2 1185.8,227.2 1198.0,241.5 C1210.2,255.8 1221.3,270.4 1233.0,287.0 C1244.7,303.6 1262.2,332.0 1268.0,341.0" fill="none" stroke="#ff0000" stroke-width="2.3"/>
<path d="M560.0,409.0 C562.1,408.2 564.6,407.8 572.5,404.5 C580.4,401.2 595.9,395.1 607.5,389.5 C619.1,383.9 630.4,377.6 642.0,371.0 C653.6,364.4 665.3,357.1 677.0,350.0 C688.7,342.9 700.3,335.4 712.0,328.5 C723.7,321.6 735.5,315.3 747.0,308.5 C758.5,301.7 769.5,294.8 781.0,287.5 C792.5,280.2 802.8,271.5 816.0,265.0 C829.2,258.5 848.5,252.5 860.0,248.5 C871.5,244.5 875.0,244.7 885.0,241.0 C895.0,237.3 908.3,232.3 920.0,226.5 C931.7,220.7 943.3,212.0 955.0,206.0 C966.7,200.0 978.3,194.4 990.0,190.5 C1001.7,186.6 1013.3,184.8 1025.0,182.5 C1036.7,180.2 1050.0,178.2 1060.0,177.0 C1070.0,175.8 1079.2,175.2 1085.0,175.0 C1090.8,174.8 1087.5,173.6 1095.0,175.5 C1102.5,177.4 1119.2,180.8 1130.0,186.5 C1140.8,192.2 1148.7,199.7 1160.0,209.5 C1171.3,219.3 1185.8,232.0 1198.0,245.5 C1210.2,259.0 1221.3,274.3 1233.0,290.5 C1244.7,306.7 1262.2,333.8 1268.0,342.5" fill="none" stroke="#ff0000" stroke-width="2.3"/>
<path d="M560.0,413.0 C562.1,412.2 564.6,411.1 572.5,408.0 C580.4,404.9 595.9,399.6 607.5,394.5 C619.1,389.4 630.4,383.3 642.0,377.5 C653.6,371.7 665.3,366.2 677.0,359.5 C688.7,352.8 700.3,344.6 712.0,337.5 C723.7,330.4 735.5,323.5 747.0,317.0 C758.5,310.5 769.5,304.8 781.0,298.5 C792.5,292.2 802.8,285.4 816.0,279.0 C829.2,272.6 842.7,266.2 860.0,260.0 C877.3,253.8 904.2,246.9 920.0,241.5 C935.8,236.1 943.3,232.8 955.0,227.5 C966.7,222.2 978.3,214.7 990.0,210.0 C1001.7,205.3 1013.3,202.1 1025.0,199.5 C1036.7,196.9 1048.3,195.2 1060.0,194.5 C1071.7,193.8 1083.3,194.0 1095.0,195.0 C1106.7,196.0 1119.2,197.5 1130.0,200.5 C1140.8,203.5 1148.7,204.3 1160.0,213.0 C1171.3,221.7 1185.8,238.4 1198.0,252.5 C1210.2,266.6 1221.3,282.2 1233.0,297.5 C1244.7,312.8 1262.2,336.7 1268.0,344.5" fill="none" stroke="#ff0000" stroke-width="2.3"/>
<path d="M560.0,414.5 C562.1,413.7 564.6,412.5 572.5,409.5 C580.4,406.5 595.9,401.4 607.5,396.5 C619.1,391.6 630.4,385.5 642.0,380.0 C653.6,374.5 665.3,370.1 677.0,363.5 C688.7,356.9 700.3,347.7 712.0,340.5 C723.7,333.3 735.5,326.9 747.0,320.5 C758.5,314.1 769.5,308.2 781.0,302.0 C792.5,295.8 802.8,289.8 816.0,283.5 C829.2,277.2 842.7,270.6 860.0,264.0 C877.3,257.4 904.2,249.5 920.0,244.0 C935.8,238.5 943.3,236.2 955.0,231.0 C966.7,225.8 978.3,217.4 990.0,212.5 C1001.7,207.6 1013.3,204.2 1025.0,201.5 C1036.7,198.8 1048.3,196.9 1060.0,196.0 C1071.7,195.1 1083.3,194.9 1095.0,196.0 C1106.7,197.1 1119.2,198.8 1130.0,202.5 C1140.8,206.2 1148.7,209.2 1160.0,218.0 C1171.3,226.8 1185.8,241.3 1198.0,255.0 C1210.2,268.7 1221.3,284.9 1233.0,300.0 C1244.7,315.1 1262.2,337.9 1268.0,345.5" fill="none" stroke="#ff0000" stroke-width="2.3"/>
<path d="M560.0,416.0 C562.1,415.2 564.6,413.9 572.5,411.0 C580.4,408.1 595.9,403.1 607.5,398.5 C619.1,393.9 630.4,388.6 642.0,383.5 C653.6,378.4 665.3,374.6 677.0,368.0 C688.7,361.4 700.3,351.2 712.0,344.0 C723.7,336.8 735.5,330.9 747.0,325.0 C758.5,319.1 769.5,314.1 781.0,308.5 C792.5,302.9 802.8,298.3 816.0,291.5 C829.2,284.7 842.7,274.6 860.0,267.5 C877.3,260.4 904.2,254.0 920.0,249.0 C935.8,244.0 943.3,242.5 955.0,237.5 C966.7,232.5 978.3,224.7 990.0,219.0 C1001.7,213.3 1013.3,207.0 1025.0,203.5 C1036.7,200.0 1048.3,199.0 1060.0,198.0 C1071.7,197.0 1083.3,196.4 1095.0,197.5 C1106.7,198.6 1119.2,200.4 1130.0,204.5 C1140.8,208.6 1148.7,213.1 1160.0,222.0 C1171.3,230.9 1185.8,244.7 1198.0,258.0 C1210.2,271.3 1221.3,287.3 1233.0,302.0 C1244.7,316.7 1262.2,338.7 1268.0,346.0" fill="none" stroke="#ff0000" stroke-width="2.3"/>
<path d="M560.0,417.5 C562.1,416.7 564.6,415.3 572.5,412.5 C580.4,409.7 595.9,404.8 607.5,400.5 C619.1,396.2 630.4,391.3 642.0,386.5 C653.6,381.7 665.3,377.8 677.0,371.5 C688.7,365.2 700.3,356.1 712.0,349.0 C723.7,341.9 735.5,335.1 747.0,329.0 C758.5,322.9 769.5,318.1 781.0,312.5 C792.5,306.9 802.8,302.4 816.0,295.5 C829.2,288.6 842.7,278.2 860.0,271.0 C877.3,263.8 904.2,257.3 920.0,252.5 C935.8,247.7 943.3,247.0 955.0,242.0 C966.7,237.0 978.3,228.0 990.0,222.5 C1001.7,217.0 1013.3,211.8 1025.0,209.0 C1036.7,206.2 1048.3,206.8 1060.0,206.0 C1071.7,205.2 1083.3,203.5 1095.0,204.0 C1106.7,204.5 1119.2,205.4 1130.0,209.0 C1140.8,212.6 1148.7,216.8 1160.0,225.5 C1171.3,234.2 1185.8,247.8 1198.0,261.0 C1210.2,274.2 1221.3,290.7 1233.0,305.0 C1244.7,319.3 1262.2,340.0 1268.0,347.0" fill="none" stroke="#ff0000" stroke-width="2.3"/>
<path d="M560.0,419.0 C562.1,418.2 564.6,416.8 572.5,414.0 C580.4,411.2 595.9,406.5 607.5,402.5 C619.1,398.5 630.4,394.6 642.0,390.0 C653.6,385.4 665.3,381.0 677.0,375.0 C688.7,369.0 700.3,361.2 712.0,354.0 C723.7,346.8 735.5,338.2 747.0,332.0 C758.5,325.8 769.5,321.8 781.0,316.5 C792.5,311.2 802.8,306.8 816.0,300.0 C829.2,293.2 842.7,283.3 860.0,276.0 C877.3,268.7 904.2,261.0 920.0,256.0 C935.8,251.0 943.3,250.3 955.0,246.0 C966.7,241.7 978.3,235.4 990.0,230.0 C1001.7,224.6 1013.3,216.9 1025.0,213.5 C1036.7,210.1 1048.3,210.3 1060.0,209.5 C1071.7,208.7 1083.3,207.8 1095.0,208.5 C1106.7,209.2 1119.2,210.2 1130.0,213.5 C1140.8,216.8 1148.7,220.1 1160.0,228.5 C1171.3,236.9 1185.8,250.8 1198.0,264.0 C1210.2,277.2 1221.3,294.0 1233.0,308.0 C1244.7,322.0 1262.2,341.3 1268.0,348.0" fill="none" stroke="#ff0000" stroke-width="2.3"/>
<path d="M560.0,420.5 C562.1,419.8 564.6,418.7 572.5,416.0 C580.4,413.3 595.9,408.3 607.5,404.5 C619.1,400.7 630.4,397.3 642.0,393.0 C653.6,388.7 665.3,383.8 677.0,378.5 C688.7,373.2 700.3,366.9 712.0,361.0 C723.7,355.1 735.5,349.2 747.0,343.0 C758.5,336.8 769.5,329.8 781.0,323.5 C792.5,317.2 802.8,312.6 816.0,305.5 C829.2,298.4 842.7,288.4 860.0,281.0 C877.3,273.6 904.2,266.0 920.0,261.0 C935.8,256.0 943.3,254.7 955.0,251.0 C966.7,247.3 978.3,243.3 990.0,239.0 C1001.7,234.7 1013.3,228.7 1025.0,225.0 C1036.7,221.3 1048.3,218.6 1060.0,217.0 C1071.7,215.4 1083.3,215.1 1095.0,215.7 C1106.7,216.3 1119.2,217.9 1130.0,220.5 C1140.8,223.1 1148.7,223.6 1160.0,231.5 C1171.3,239.4 1185.8,254.6 1198.0,268.0 C1210.2,281.4 1221.3,298.3 1233.0,312.0 C1244.7,325.7 1262.2,343.7 1268.0,350.0" fill="none" stroke="#ff0000" stroke-width="2.3"/>
<path d="M1185.0,240.0 C1187.2,242.2 1190.0,243.3 1198.0,253.0 C1206.0,262.7 1221.3,283.0 1233.0,298.0 C1244.7,313.0 1262.2,335.5 1268.0,343.0 L1268.0,351.0 C1262.2,344.4 1244.7,325.3 1233.0,311.5 C1221.3,297.7 1206.8,278.9 1198.0,268.0 C1189.2,257.1 1183.0,249.7 1180.0,246.0 Z" fill="#ff0000"/>
<line x1="16" y1="153.5" x2="1269" y2="153.5" stroke="#fff" stroke-width="1"/>
<line x1="16.5" y1="153" x2="16.5" y2="587" stroke="#80ff80" stroke-width="1"/>
<line x1="1268.5" y1="153" x2="1268.5" y2="587" stroke="#ffff00" stroke-width="1"/>
<line x1="16" y1="586.5" x2="1269" y2="586.5" stroke="#bcbcbc" stroke-width="1"/>
<line x1="25.5" y1="587" x2="25.5" y2="589" stroke="#bcbcbc" stroke-width="1"/>
<line x1="33.5" y1="587" x2="33.5" y2="589" stroke="#bcbcbc" stroke-width="1"/>
<line x1="42.5" y1="587" x2="42.5" y2="589" stroke="#bcbcbc" stroke-width="1"/>
<line x1="51.5" y1="587" x2="51.5" y2="591" stroke="#bcbcbc" stroke-width="1"/>
<line x1="59.5" y1="587" x2="59.5" y2="589" stroke="#bcbcbc" stroke-width="1"/>
<line x1="68.5" y1="587" x2="68.5" y2="589" stroke="#bcbcbc" stroke-width="1"/>
<line x1="77.5" y1="587" x2="77.5" y2="589" stroke="#bcbcbc" stroke-width="1"/>
<line x1="86.5" y1="587" x2="86.5" y2="591" stroke="#bcbcbc" stroke-width="1"/>
<line x1="94.5" y1="587" x2="94.5" y2="589" stroke="#bcbcbc" stroke-width="1"/>
<line x1="103.5" y1="587" x2="103.5" y2="589" stroke="#bcbcbc" stroke-width="1"/>
<line x1="112.5" y1="587" x2="112.5" y2="589" stroke="#bcbcbc" stroke-width="1"/>
<line x1="120.5" y1="587" x2="120.5" y2="591" stroke="#bcbcbc" stroke-width="1"/>
<line x1="129.5" y1="587" x2="129.5" y2="589" stroke="#bcbcbc" stroke-width="1"/>
<line x1="138.5" y1="587" x2="138.5" y2="589" stroke="#bcbcbc" stroke-width="1"/>
<line x1="146.5" y1="587" x2="146.5" y2="589" stroke="#bcbcbc" stroke-width="1"/>
<line x1="155.5" y1="587" x2="155.5" y2="591" stroke="#bcbcbc" stroke-width="1"/>
<line x1="164.5" y1="587" x2="164.5" y2="589" stroke="#bcbcbc" stroke-width="1"/>
<line x1="172.5" y1="587" x2="172.5" y2="589" stroke="#bcbcbc" stroke-width="1"/>
<line x1="181.5" y1="587" x2="181.5" y2="589" stroke="#bcbcbc" stroke-width="1"/>
<line x1="190.5" y1="587" x2="190.5" y2="591" stroke="#bcbcbc" stroke-width="1"/>
<line x1="199.5" y1="587" x2="199.5" y2="589" stroke="#bcbcbc" stroke-width="1"/>
<line x1="207.5" y1="587" x2="207.5" y2="589" stroke="#bcbcbc" stroke-width="1"/>
<line x1="216.5" y1="587" x2="216.5" y2="589" stroke="#bcbcbc" stroke-width="1"/>
<line x1="225.5" y1="587" x2="225.5" y2="591" stroke="#bcbcbc" stroke-width="1"/>
<line x1="233.5" y1="587" x2="233.5" y2="589" stroke="#bcbcbc" stroke-width="1"/>
<line x1="242.5" y1="587" x2="242.5" y2="589" stroke="#bcbcbc" stroke-width="1"/>
<line x1="251.5" y1="587" x2="251.5" y2="589" stroke="#bcbcbc" stroke-width="1"/>
<line x1="259.5" y1="587" x2="259.5" y2="591" stroke="#bcbcbc" stroke-width="1"/>
<line x1="268.5" y1="587" x2="268.5" y2="589" stroke="#bcbcbc" stroke-width="1"/>
<line x1="277.5" y1="587" x2="277.5" y2="589" stroke="#bcbcbc" stroke-width="1"/>
<line x1="286.5" y1="587" x2="286.5" y2="589" stroke="#bcbcbc" stroke-width="1"/>
<line x1="294.5" y1="587" x2="294.5" y2="591" stroke="#bcbcbc" stroke-width="1"/>
<line x1="303.5" y1="587" x2="303.5" y2="589" stroke="#bcbcbc" stroke-width="1"/>
<line x1="312.5" y1="587" x2="312.5" y2="589" stroke="#bcbcbc" stroke-width="1"/>
<line x1="320.5" y1="587" x2="320.5" y2="589" stroke="#bcbcbc" stroke-width="1"/>
<line x1="329.5" y1="587" x2="329.5" y2="591" stroke="#bcbcbc" stroke-width="1"/>
<line x1="338.5" y1="587" x2="338.5" y2="589" stroke="#bcbcbc" stroke-width="1"/>
<line x1="346.5" y1="587" x2="346.5" y2="589" stroke="#bcbcbc" stroke-width="1"/>
<line x1="355.5" y1="587" x2="355.5" y2="589" stroke="#bcbcbc" stroke-width="1"/>
<line x1="364.5" y1="587" x2="364.5" y2="591" stroke="#bcbcbc" stroke-width="1"/>
<line x1="372.5" y1="587" x2="372.5" y2="589" stroke="#bcbcbc" stroke-width="1"/>
<line x1="381.5" y1="587" x2="381.5" y2="589" stroke="#bcbcbc" stroke-width="1"/>
<line x1="390.5" y1="587" x2="390.5" y2="589" stroke="#bcbcbc" stroke-width="1"/>
<line x1="399.5" y1="587" x2="399.5" y2="591" stroke="#bcbcbc" stroke-width="1"/>
<line x1="407.5" y1="587" x2="407.5" y2="589" stroke="#bcbcbc" stroke-width="1"/>
<line x1="416.5" y1="587" x2="416.5" y2="589" stroke="#bcbcbc" stroke-width="1"/>
<line x1="425.5" y1="587" x2="425.5" y2="589" stroke="#bcbcbc" stroke-width="1"/>
<line x1="433.5" y1="587" x2="433.5" y2="591" stroke="#bcbcbc" stroke-width="1"/>
<line x1="442.5" y1="587" x2="442.5" y2="589" stroke="#bcbcbc" stroke-width="1"/>
<line x1="451.5" y1="587" x2="451.5" y2="589" stroke="#bcbcbc" stroke-width="1"/>
<line x1="459.5" y1="587" x2="459.5" y2="589" stroke="#bcbcbc" stroke-width="1"/>
<line x1="468.5" y1="587" x2="468.5" y2="591" stroke="#bcbcbc" stroke-width="1"/>
<line x1="477.5" y1="587" x2="477.5" y2="589" stroke="#bcbcbc" stroke-width="1"/>
<line x1="486.5" y1="587" x2="486.5" y2="589" stroke="#bcbcbc" stroke-width="1"/>
<line x1="494.5" y1="587" x2="494.5" y2="589" stroke="#bcbcbc" stroke-width="1"/>
<line x1="503.5" y1="587" x2="503.5" y2="591" stroke="#bcbcbc" stroke-width="1"/>
<line x1="512.5" y1="587" x2="512.5" y2="589" stroke="#bcbcbc" stroke-width="1"/>
<line x1="520.5" y1="587" x2="520.5" y2="589" stroke="#bcbcbc" stroke-width="1"/>
<line x1="529.5" y1="587" x2="529.5" y2="589" stroke="#bcbcbc" stroke-width="1"/>
<line x1="538.5" y1="587" x2="538.5" y2="591" stroke="#bcbcbc" stroke-width="1"/>
<line x1="546.5" y1="587" x2="546.5" y2="589" stroke="#bcbcbc" stroke-width="1"/>
<line x1="555.5" y1="587" x2="555.5" y2="589" stroke="#bcbcbc" stroke-width="1"/>
<line x1="564.5" y1="587" x2="564.5" y2="589" stroke="#bcbcbc" stroke-width="1"/>
<line x1="572.5" y1="587" x2="572.5" y2="591" stroke="#bcbcbc" stroke-width="1"/>
<line x1="581.5" y1="587" x2="581.5" y2="589" stroke="#bcbcbc" stroke-width="1"/>
<line x1="590.5" y1="587" x2="590.5" y2="589" stroke="#bcbcbc" stroke-width="1"/>
<line x1="599.5" y1="587" x2="599.5" y2="589" stroke="#bcbcbc" stroke-width="1"/>
<line x1="607.5" y1="587" x2="607.5" y2="591" stroke="#bcbcbc" stroke-width="1"/>
<line x1="616.5" y1="587" x2="616.5" y2="589" stroke="#bcbcbc" stroke-width="1"/>
<line x1="625.5" y1="587" x2="625.5" y2="589" stroke="#bcbcbc" stroke-width="1"/>
<line x1="633.5" y1="587" x2="633.5" y2="589" stroke="#bcbcbc" stroke-width="1"/>
<line x1="642.5" y1="587" x2="642.5" y2="591" stroke="#bcbcbc" stroke-width="1"/>
<line x1="651.5" y1="587" x2="651.5" y2="589" stroke="#bcbcbc" stroke-width="1"/>
<line x1="659.5" y1="587" x2="659.5" y2="589" stroke="#bcbcbc" stroke-width="1"/>
<line x1="668.5" y1="587" x2="668.5" y2="589" stroke="#bcbcbc" stroke-width="1"/>
<line x1="677.5" y1="587" x2="677.5" y2="591" stroke="#bcbcbc" stroke-width="1"/>
<line x1="685.5" y1="587" x2="685.5" y2="589" stroke="#bcbcbc" stroke-width="1"/>
<line x1="694.5" y1="587" x2="694.5" y2="589" stroke="#bcbcbc" stroke-width="1"/>
<line x1="703.5" y1="587" x2="703.5" y2="589" stroke="#bcbcbc" stroke-width="1"/>
<line x1="712.5" y1="587" x2="712.5" y2="591" stroke="#bcbcbc" stroke-width="1"/>
<line x1="720.5" y1="587" x2="720.5" y2="589" stroke="#bcbcbc" stroke-width="1"/>
<line x1="729.5" y1="587" x2="729.5" y2="589" stroke="#bcbcbc" stroke-width="1"/>
<line x1="738.5" y1="587" x2="738.5" y2="589" stroke="#bcbcbc" stroke-width="1"/>
<line x1="746.5" y1="587" x2="746.5" y2="591" stroke="#bcbcbc" stroke-width="1"/>
<line x1="755.5" y1="587" x2="755.5" y2="589" stroke="#bcbcbc" stroke-width="1"/>
<line x1="764.5" y1="587" x2="764.5" y2="589" stroke="#bcbcbc" stroke-width="1"/>
<line x1="772.5" y1="587" x2="772.5" y2="589" stroke="#bcbcbc" stroke-width="1"/>
<line x1="781.5" y1="587" x2="781.5" y2="591" stroke="#bcbcbc" stroke-width="1"/>
<line x1="790.5" y1="587" x2="790.5" y2="589" stroke="#bcbcbc" stroke-width="1"/>
<line x1="798.5" y1="587" x2="798.5" y2="589" stroke="#bcbcbc" stroke-width="1"/>
<line x1="807.5" y1="587" x2="807.5" y2="589" stroke="#bcbcbc" stroke-width="1"/>
<line x1="816.5" y1="587" x2="816.5" y2="591" stroke="#bcbcbc" stroke-width="1"/>
<line x1="825.5" y1="587" x2="825.5" y2="589" stroke="#bcbcbc" stroke-width="1"/>
<line x1="833.5" y1="587" x2="833.5" y2="589" stroke="#bcbcbc" stroke-width="1"/>
<line x1="842.5" y1="587" x2="842.5" y2="589" stroke="#bcbcbc" stroke-width="1"/>
<line x1="851.5" y1="587" x2="851.5" y2="591" stroke="#bcbcbc" stroke-width="1"/>
<line x1="859.5" y1="587" x2="859.5" y2="589" stroke="#bcbcbc" stroke-width="1"/>
<line x1="868.5" y1="587" x2="868.5" y2="589" stroke="#bcbcbc" stroke-width="1"/>
<line x1="877.5" y1="587" x2="877.5" y2="589" stroke="#bcbcbc" stroke-width="1"/>
<line x1="885.5" y1="587" x2="885.5" y2="591" stroke="#bcbcbc" stroke-width="1"/>
<line x1="894.5" y1="587" x2="894.5" y2="589" stroke="#bcbcbc" stroke-width="1"/>
<line x1="903.5" y1="587" x2="903.5" y2="589" stroke="#bcbcbc" stroke-width="1"/>
<line x1="912.5" y1="587" x2="912.5" y2="589" stroke="#bcbcbc" stroke-width="1"/>
<line x1="920.5" y1="587" x2="920.5" y2="591" stroke="#bcbcbc" stroke-width="1"/>
<line x1="929.5" y1="587" x2="929.5" y2="589" stroke="#bcbcbc" stroke-width="1"/>
<line x1="938.5" y1="587" x2="938.5" y2="589" stroke="#bcbcbc" stroke-width="1"/>
<line x1="946.5" y1="587" x2="946.5" y2="589" stroke="#bcbcbc" stroke-width="1"/>
<line x1="955.5" y1="587" x2="955.5" y2="591" stroke="#bcbcbc" stroke-width="1"/>
<line x1="964.5" y1="587" x2="964.5" y2="589" stroke="#bcbcbc" stroke-width="1"/>
<line x1="972.5" y1="587" x2="972.5" y2="589" stroke="#bcbcbc" stroke-width="1"/>
<line x1="981.5" y1="587" x2="981.5" y2="589" stroke="#bcbcbc" stroke-width="1"/>
<line x1="990.5" y1="587" x2="990.5" y2="591" stroke="#bcbcbc" stroke-width="1"/>
<line x1="998.5" y1="587" x2="998.5" y2="589" stroke="#bcbcbc" stroke-width="1"/>
<line x1="1007.5" y1="587" x2="1007.5" y2="589" stroke="#bcbcbc" stroke-width="1"/>
<line x1="1016.5" y1="587" x2="1016.5" y2="589" stroke="#bcbcbc" stroke-width="1"/>
<line x1="1025.5" y1="587" x2="1025.5" y2="591" stroke="#bcbcbc" stroke-width="1"/>
<line x1="1033.5" y1="587" x2="1033.5" y2="589" stroke="#bcbcbc" stroke-width="1"/>
<line x1="1042.5" y1="587" x2="1042.5" y2="589" stroke="#bcbcbc" stroke-width="1"/>
<line x1="1051.5" y1="587" x2="1051.5" y2="589" stroke="#bcbcbc" stroke-width="1"/>
<line x1="1059.5" y1="587" x2="1059.5" y2="591" stroke="#bcbcbc" stroke-width="1"/>
<line x1="1068.5" y1="587" x2="1068.5" y2="589" stroke="#bcbcbc" stroke-width="1"/>
<line x1="1077.5" y1="587" x2="1077.5" y2="589" stroke="#bcbcbc" stroke-width="1"/>
<line x1="1085.5" y1="587" x2="1085.5" y2="589" stroke="#bcbcbc" stroke-width="1"/>
<line x1="1094.5" y1="587" x2="1094.5" y2="591" stroke="#bcbcbc" stroke-width="1"/>
<line x1="1103.5" y1="587" x2="1103.5" y2="589" stroke="#bcbcbc" stroke-width="1"/>
<line x1="1112.5" y1="587" x2="1112.5" y2="589" stroke="#bcbcbc" stroke-width="1"/>
<line x1="1120.5" y1="587" x2="1120.5" y2="589" stroke="#bcbcbc" stroke-width="1"/>
<line x1="1129.5" y1="587" x2="1129.5" y2="591" stroke="#bcbcbc" stroke-width="1"/>
<line x1="1138.5" y1="587" x2="1138.5" y2="589" stroke="#bcbcbc" stroke-width="1"/>
<line x1="1146.5" y1="587" x2="1146.5" y2="589" stroke="#bcbcbc" stroke-width="1"/>
<line x1="1155.5" y1="587" x2="1155.5" y2="589" stroke="#bcbcbc" stroke-width="1"/>
<line x1="1164.5" y1="587" x2="1164.5" y2="591" stroke="#bcbcbc" stroke-width="1"/>
<line x1="1172.5" y1="587" x2="1172.5" y2="589" stroke="#bcbcbc" stroke-width="1"/>
<line x1="1181.5" y1="587" x2="1181.5" y2="589" stroke="#bcbcbc" stroke-width="1"/>
<line x1="1190.5" y1="587" x2="1190.5" y2="589" stroke="#bcbcbc" stroke-width="1"/>
<line x1="1198.5" y1="587" x2="1198.5" y2="591" stroke="#bcbcbc" stroke-width="1"/>
<line x1="1207.5" y1="587" x2="1207.5" y2="589" stroke="#bcbcbc" stroke-width="1"/>
<line x1="1216.5" y1="587" x2="1216.5" y2="589" stroke="#bcbcbc" stroke-width="1"/>
<line x1="1225.5" y1="587" x2="1225.5" y2="589" stroke="#bcbcbc" stroke-width="1"/>
<line x1="1233.5" y1="587" x2="1233.5" y2="591" stroke="#bcbcbc" stroke-width="1"/>
<line x1="1242.5" y1="587" x2="1242.5" y2="589" stroke="#bcbcbc" stroke-width="1"/>
<line x1="1251.5" y1="587" x2="1251.5" y2="589" stroke="#bcbcbc" stroke-width="1"/>
<line x1="1259.5" y1="587" x2="1259.5" y2="589" stroke="#bcbcbc" stroke-width="1"/>
<line x1="1268.5" y1="587" x2="1268.5" y2="591" stroke="#bcbcbc" stroke-width="1"/>
<polygon points="7.5,143.5 24.5,143.5 16,152" fill="#800080"/>
<polygon points="1259.500,143.5 1276.5,143.5 1268,152" fill="#0000ff"/>
</svg>
<div class="tl" style="left:35.8px">5</div>
<div class="tl" style="left:70.6px">10</div>
<div class="tl" style="left:105.3px">15</div>
<div class="tl" style="left:140.1px">20</div>
<div class="tl" style="left:174.9px">25</div>
<div class="tl" style="left:209.7px">30</div>
<div class="tl" style="left:244.4px">35</div>
<div class="tl" style="left:279.2px">40</div>
<div class="tl" style="left:314.0px">45</div>
<div class="tl" style="left:348.8px">50</div>
<div class="tl" style="left:383.6px">55</div>
<div class="tl" style="left:418.3px">60</div>
<div class="tl" style="left:453.1px">65</div>
<div class="tl" style="left:487.9px">70</div>
<div class="tl" style="left:522.7px">75</div>
<div class="tl" style="left:557.4px">80</div>
<div class="tl" style="left:592.2px">85</div>
<div class="tl" style="left:627.0px">90</div>
<div class="tl" style="left:661.8px">95</div>
<div class="tl" style="left:696.6px">100</div>
<div class="tl" style="left:731.3px">105</div>
<div class="tl" style="left:766.1px">110</div>
<div class="tl" style="left:800.9px">115</div>
<div class="tl" style="left:835.7px">120</div>
<div class="tl" style="left:870.4px">125</div>
<div class="tl" style="left:905.2px">130</div>
<div class="tl" style="left:940.0px">135</div>
<div class="tl" style="left:974.8px">140</div>
<div class="tl" style="left:1009.6px">145</div>
<div class="tl" style="left:1044.3px">150</div>
<div class="tl" style="left:1079.1px">155</div>
<div class="tl" style="left:1113.9px">160</div>
<div class="tl" style="left:1148.7px">165</div>
<div class="tl" style="left:1183.4px">170</div>
<div class="tl" style="left:1218.2px">175</div>
<div class="tl" style="left:1253.0px">180</div>
<!-- chart title -->
<span style="position:absolute;white-space:nowrap;display:inline-block;transform-origin:0 50%;transform:scaleX(1.0828);left:192.67px;top:118.2px;font-size:13.2px;line-height:17px;letter-spacing:0.000px;color:#fff;">Количество газа в цилиндре</span>
<span style="position:absolute;white-space:nowrap;display:inline-block;transform-origin:0 50%;transform:scaleX(1.1030);left:383.40px;top:118.2px;font-size:13.2px;line-height:17px;letter-spacing:0.000px;color:#fff;">(по вертикали) в</span>
<span style="position:absolute;white-space:nowrap;display:inline-block;transform-origin:0 50%;transform:scaleX(1.0427);left:496.66px;top:118.2px;font-size:13.2px;line-height:17px;letter-spacing:0.000px;color:#fff;">зависимости от угла</span>
<span style="position:absolute;white-space:nowrap;display:inline-block;transform-origin:0 50%;transform:scaleX(1.0919);left:630.91px;top:118.2px;font-size:13.2px;line-height:17px;letter-spacing:-0.000px;color:#fff;">поворота коленвала</span>
<span style="position:absolute;white-space:nowrap;display:inline-block;transform-origin:0 50%;transform:scaleX(1.0960);left:769.90px;top:118.2px;font-size:13.2px;line-height:17px;letter-spacing:0.000px;color:#fff;">(по горизонтали) и</span>
<span style="position:absolute;white-space:nowrap;display:inline-block;transform-origin:0 50%;transform:scaleX(1.1222);left:898.75px;top:118.2px;font-size:13.2px;line-height:17px;letter-spacing:0.000px;color:#fff;">от такта (цвет)</span>
<span style="position:absolute;white-space:nowrap;display:inline-block;transform-origin:0 50%;transform:scaleX(1.0529);left:1001.95px;top:118.2px;font-size:13.2px;line-height:17px;letter-spacing:0.000px;color:#fff;">при 1180 RPM</span>
<!-- info box -->
<div class="abs" style="left:22px;top:159px;width:185px;height:81px;background:#ffff99;border:1px solid #fffff0;border-radius:3px;color:#000;font-size:13.5px;line-height:16px">
 
</div>

<span style="position:absolute;white-space:nowrap;display:inline-block;transform-origin:0 50%;transform:scaleX(1.0530);left:45.65px;top:162.0px;font-size:13.2px;line-height:17px;letter-spacing:0.000px;font-weight:bold;color:#000;text-decoration:underline">Результаты анализа</span>
<span style="position:absolute;white-space:nowrap;display:inline-block;transform-origin:0 50%;transform:scaleX(1.0975);left:28.90px;top:182.0px;font-size:13.2px;line-height:17px;letter-spacing:0.000px;">Найдено пиков: 197</span>
<span style="position:absolute;white-space:nowrap;display:inline-block;transform-origin:0 50%;transform:scaleX(1.1105);left:28.89px;top:198.0px;font-size:13.2px;line-height:17px;letter-spacing:0.000px;">Степень сжатия: 7.8:1</span>
<span style="position:absolute;white-space:nowrap;display:inline-block;transform-origin:0 50%;transform:scaleX(1.1017);left:28.90px;top:214.0px;font-size:13.2px;line-height:17px;letter-spacing:0.000px;">Потери общие: 18%</span>
<!-- stroke bars -->
<div class="bar" style="left:7px;width:318px;background:#00ff00"><div class="cb"><svg width="11" height="11" viewBox="0 0 11 11"><path d="M2,5 L4.5,8 L9,2.500" fill="none" stroke="#3a8ee6" stroke-width="2"/></svg></div><svg class="arr" style="right:5px" width="15" height="12" viewBox="0 0 17 13"><path d="M0,4.600 H9.500 V2 L17,6.500 L9.500,11 V8.400 H0 Z" fill="#000"/></svg></div>
<div class="bar" style="left:326px;width:318px;background:#00ffff"><div class="cb"><svg width="11" height="11" viewBox="0 0 11 11"><path d="M2,5 L4.5,8 L9,2.500" fill="none" stroke="#3a8ee6" stroke-width="2"/></svg></div><svg class="arr" style="right:5px" width="15" height="12" viewBox="0 0 17 13"><path d="M17,4.600 H7.500 V2 L0,6.500 L7.500,11 V8.400 H17 Z" fill="#000"/></svg></div>
<div class="bar" style="left:645px;width:318px;background:#ffff00"><div class="cb"><svg width="11" height="11" viewBox="0 0 11 11"><path d="M2,5 L4.5,8 L9,2.500" fill="none" stroke="#3a8ee6" stroke-width="2"/></svg></div><svg class="arr" style="right:5px" width="15" height="12" viewBox="0 0 17 13"><path d="M0,4.600 H9.500 V2 L17,6.500 L9.500,11 V8.400 H0 Z" fill="#000"/></svg></div>
<div class="bar" style="left:965px;width:315px;background:#ff0000;color:#500000"><div class="cb"><svg width="11" height="11" viewBox="0 0 11 11"><path d="M2,5 L4.5,8 L9,2.500" fill="none" stroke="#3a8ee6" stroke-width="2"/></svg></div><svg class="arr" style="right:5px" width="15" height="12" viewBox="0 0 17 13"><path d="M17,4.600 H7.500 V2 L0,6.500 L7.500,11 V8.400 H17 Z" fill="#000"/></svg></div>

<span style="position:absolute;white-space:nowrap;display:inline-block;transform-origin:0 50%;transform:scaleX(1.1628);left:113.84px;top:609.8px;font-size:13.2px;line-height:17px;letter-spacing:0.000px;font-weight:bold;color:#101010;">Впуск 360.00°</span>
<span style="position:absolute;white-space:nowrap;display:inline-block;transform-origin:0 50%;transform:scaleX(1.1855);left:392.50px;top:609.8px;font-size:13.2px;line-height:17px;letter-spacing:0.000px;font-weight:bold;color:#101010;">Сжатие 720.00° (180.00°)</span>
<span style="position:absolute;white-space:nowrap;display:inline-block;transform-origin:0 50%;transform:scaleX(1.1849);left:716.32px;top:609.8px;font-size:13.2px;line-height:17px;letter-spacing:0.000px;font-weight:bold;color:#101010;">Раб. ход 0.00° (180.00°)</span>
<span style="position:absolute;white-space:nowrap;display:inline-block;transform-origin:0 50%;transform:scaleX(1.1392);left:1065.86px;top:609.8px;font-size:13.2px;line-height:17px;letter-spacing:0.000px;font-weight:bold;color:#5a0000;">Выпуск 360.00°</span>
<!-- scroll row -->
<div class="abs" style="left:5px;top:631px;width:1278px;height:16px;background:#f0f0f0"></div>
<div class="abs" style="left:5px;top:646px;width:1278px;height:1px;background:#6c6c6c;z-index:5"></div><div class="abs" style="left:5px;top:647px;width:1278px;height:1px;background:#9c9c9c;z-index:5"></div><div class="abs" style="left:5px;top:645px;width:1278px;height:1px;background:rgba(120,120,120,.45);z-index:5"></div>
<div class="sb" style="left:6px;width:17px"><svg class="abs" style="left:1px;top:1px" width="13" height="13" viewBox="0 0 13 13"><circle cx="6.5" cy="6.5" r="5.5" fill="#fff" stroke="#000" stroke-width="1"/><rect x="3.500" y="5.500" width="6" height="2" fill="#000080"/></svg></div>
<div class="sb" style="left:23px;width:40px"></div><span style="position:absolute;white-space:nowrap;display:inline-block;transform-origin:0 50%;transform:scaleX(1.1875);left:33.21px;top:631.8px;font-size:13px;line-height:17px;letter-spacing:0.000px;color:#280808;">1:1</span>
<div class="sb" style="left:63px;width:17px"><svg class="abs" style="left:1px;top:1px" width="13" height="13" viewBox="0 0 13 13"><circle cx="6.5" cy="6.5" r="5.5" fill="#fff" stroke="#000" stroke-width="1"/><path d="M3.5,6.5 H9.5 M6.5,3.5 V9.5" stroke="#800000" stroke-width="2"/></svg></div>
<div class="sb" style="left:80px;width:17px"><svg class="abs" style="left:4px;top:3px" width="6" height="9" viewBox="0 0 6 9"><path d="M5,0 L0,4.5 L5,9 Z" fill="#000"/></svg></div>
<div class="sb" style="left:97px;width:993px;border-color:#fff #8a8a8a #8a8a8a #8a8a8a"></div>
<div class="sb" style="left:1090px;width:17px"><svg class="abs" style="left:1px;top:1px" width="13" height="13" viewBox="0 0 13 13"><circle cx="6.5" cy="6.5" r="5.500" fill="#fff" stroke="#000" stroke-width="1"/><path d="M3.5,6.5 H9.5 M6.5,3.5 V9.5" stroke="#008000" stroke-width="2"/></svg></div>
<div class="sb" style="left:1107px;width:23px"><svg class="abs" style="left:5px;top:4px" width="10" height="7" viewBox="0 0 11 9" preserveAspectRatio="none"><path d="M0,0 H2 V9 H0 Z M11,0 L3,4.5 L11,9 Z" fill="#000"/></svg></div>
<div class="sb" style="left:1130px;width:24px"><svg class="abs" style="left:7px;top:4px" width="8" height="7" viewBox="0 0 9 9" preserveAspectRatio="none"><path d="M9,0 L0,4.5 L9,9 Z" fill="#000"/></svg></div>
<div class="sb" style="left:1154px;width:58px;font-size:13px;line-height:13px;text-align:center;color:#181830;font-weight:bold;letter-spacing:1.5px;border-color:#fff #f0f0f0 #8a8a8a #fff;padding-right:4px">...</div>
<div class="sb" style="left:1212px;width:23px"><svg class="abs" style="left:7px;top:4px" width="8" height="7" viewBox="0 0 9 9" preserveAspectRatio="none"><path d="M0,0 L9,4.5 L0,9 Z" fill="#000"/></svg></div>
<div class="sb" style="left:1235px;width:23px"><svg class="abs" style="left:6px;top:4px" width="10" height="7" viewBox="0 0 11 9" preserveAspectRatio="none"><path d="M9,0 H11 V9 H9 Z M0,0 L8,4.5 L0,9 Z" fill="#000"/></svg></div>
<div class="sb" style="left:1259px;width:23px"><svg class="abs" style="left:8px;top:4px" width="8" height="7" viewBox="0 0 9 9" preserveAspectRatio="none"><path d="M0,0 L9,4.5 L0,9 Z" fill="#008000"/></svg></div>

<!-- splitter handle -->
<div class="abs" style="left:389px;top:652px;width:510px;height:7px;border:1px solid #a8a8a8;background:#f6f6f6">
 <div class="abs" style="left:12px;top:2px;width:478px;height:1px;background:repeating-linear-gradient(90deg,#3a8ee6 0,#3a8ee6 1px,transparent 1px,transparent 2px)"></div>
 <div class="abs" style="left:4px;top:1px;border:3px solid transparent;border-top:3px solid #3a8ee6;border-bottom:none"></div>
 <div class="abs" style="right:4px;top:1px;border:3px solid transparent;border-top:3px solid #3a8ee6;border-bottom:none"></div>
</div>
<!-- group box -->
<div class="abs" style="left:195px;top:660px;width:897px;height:89px;border:1px solid #d0d0d0;border-radius:4px"></div>



<div class="combo" style="left:387px;top:672px;width:201px"></div>
<div class="combo" style="left:387px;top:696px;width:201px"></div>
<div class="combo" style="left:387px;top:720px;width:465px"></div>
<div class="vsep" style="left:595px;top:666px;height:50px"></div>


<div class="combo" style="left:747px;top:672px;width:105px"></div>
<div class="combo" style="left:747px;top:696px;width:105px"></div>
<div class="vsep" style="left:859px;top:666px;height:75px"></div>
<span style="position:absolute;white-space:nowrap;display:inline-block;transform-origin:0 50%;transform:scaleX(1.0065);left:868.29px;top:669.5px;font-size:11px;line-height:15px;letter-spacing:0.000px;color:#ff0000;">M1=0.00°</span>
<span style="position:absolute;white-space:nowrap;display:inline-block;transform-origin:0 50%;transform:scaleX(1.0065);left:868.29px;top:683.0px;font-size:11px;line-height:15px;letter-spacing:0.000px;color:#0000ff;">M2=0.00°</span>
<span style="position:absolute;white-space:nowrap;display:inline-block;transform-origin:0 50%;transform:scaleX(0.9625);left:875.34px;top:698.1px;font-size:11px;line-height:15px;letter-spacing:0.000px;color:#800080;">M=0.00° (360.00°)</span>
<svg class="abs" style="left:869px;top:705px" width="7" height="6" viewBox="0 0 7 6"><path d="M0.5,5.500 L3.2,0.800 L6,5.500 Z" fill="none" stroke="#800080" stroke-width="1"/></svg>
<div class="vsep" style="left:984px;top:666px;height:75px"></div>
<div class="abs" style="left:991px;top:673px;width:91px;height:63px;border:1px solid #1f5583;border-radius:3px;background:linear-gradient(180deg,#fcfcfc 0,#f3f3f1 50%,#e7e7e2 100%);box-shadow:inset 0 0 0 1px #fff">
 <div class="abs" style="left:9px;top:22px;width:1px;height:19px;background:#a050a0"></div>
 <div class="abs" style="left:10px;top:22px;border:9.500px solid transparent;border-left:10px solid #00f800;border-right:none"></div>
</div>
<span style="position:absolute;white-space:nowrap;display:inline-block;transform-origin:0 50%;transform:scaleX(1.0750);left:1027.30px;top:697.3px;font-size:11px;line-height:15px;letter-spacing:0.000px;font-weight:bold;color:#000;">Анализ</span>
<span style="position:absolute;white-space:nowrap;display:inline-block;transform-origin:0 50%;transform:scaleX(1.0032);left:222.00px;top:675.5px;font-size:11px;line-height:15px;letter-spacing:0.000px;">Канал датчика синхронизации</span>
<span style="position:absolute;white-space:nowrap;display:inline-block;transform-origin:0 50%;transform:scaleX(1.0100);left:250.24px;top:699.0px;font-size:11px;line-height:15px;letter-spacing:0.000px;">Канал датчика давления</span>
<span style="position:absolute;white-space:nowrap;display:inline-block;transform-origin:0 50%;transform:scaleX(0.9938);left:258.25px;top:723.0px;font-size:11px;line-height:15px;letter-spacing:0.000px;">Тип газораспределения</span>
<span style="position:absolute;white-space:nowrap;display:inline-block;transform-origin:0 50%;transform:scaleX(1.0169);left:392.20px;top:674.8px;font-size:11px;line-height:15px;letter-spacing:0.000px;">4.&nbsp; Датчик синхронизации</span>
<span style="position:absolute;white-space:nowrap;display:inline-block;transform-origin:0 50%;transform:scaleX(1.0062);left:391.19px;top:698.8px;font-size:11px;line-height:15px;letter-spacing:0.000px;">1.&nbsp; Датчик давления в цилиндре</span>
<span style="position:absolute;white-space:nowrap;display:inline-block;transform-origin:0 50%;transform:scaleX(0.9990);left:391.20px;top:722.8px;font-size:11px;line-height:15px;letter-spacing:0.000px;">Цикл Отто (DOHC / SOHC / OHC / OHV)</span>
<span style="position:absolute;white-space:nowrap;display:inline-block;transform-origin:0 50%;transform:scaleX(1.0062);left:624.00px;top:675.0px;font-size:11px;line-height:15px;letter-spacing:0.000px;">Тип датчика давления</span>
<span style="position:absolute;white-space:nowrap;display:inline-block;transform-origin:0 50%;transform:scaleX(1.0056);left:648.20px;top:699.0px;font-size:11px;line-height:15px;letter-spacing:0.000px;">Объем двигателя</span>
<span style="position:absolute;white-space:nowrap;display:inline-block;transform-origin:0 50%;transform:scaleX(1.0021);left:751.40px;top:674.8px;font-size:11px;line-height:15px;letter-spacing:0.000px;">MPX5700</span>
<span style="position:absolute;white-space:nowrap;display:inline-block;transform-origin:0 50%;transform:scaleX(0.9333);left:752.00px;top:698.8px;font-size:11px;line-height:15px;letter-spacing:0.000px;">2000</span>
<!-- status bar -->
<div class="abs" style="left:4px;top:752px;width:1280px;height:1px;background:#868686"></div><div class="abs" style="left:4px;top:753px;width:1280px;height:1px;background:#fafafa"></div>
<div class="abs" style="left:4px;top:755px;width:189px;height:17px;border:1px solid;border-color:#a0a0a0 #fff #fff #a0a0a0;"></div><span style="position:absolute;white-space:nowrap;display:inline-block;transform-origin:0 50%;transform:scaleX(0.9822);left:7.02px;top:755.8px;font-size:11px;line-height:15px;letter-spacing:0.000px;">USB Осциллограф не подключен</span>
<div class="abs" style="left:196px;top:755px;width:1038px;height:17px;border:1px solid;border-color:#a0a0a0 #fff #fff #a0a0a0"></div>
<div class="abs" style="left:1236px;top:755px;width:47px;height:17px;border:1px solid;border-color:#a0a0a0 #fff #fff #a0a0a0;"></div><span style="position:absolute;white-space:nowrap;display:inline-block;transform-origin:0 50%;transform:scaleX(1.0333);left:1238.50px;top:755.8px;font-size:11px;line-height:15px;letter-spacing:-0.000px;">2.1</span>
<!-- taskbar sliver -->
<div class="abs" style="left:4px;top:772px;width:1280px;height:4px;background:linear-gradient(90deg,#3f7fb5,#4a90c8 8%,#3a80b8 30%,#3a86bd 60%,#2f74ac 95%,#1f4f7c)"></div><div class="abs" style="left:4px;top:772px;width:1280px;height:1px;background:#1f4a72"></div>
<div class="abs" style="left:128px;top:772px;width:58px;height:4px;background:#a9cbe6;border-radius:2px 2px 0 0"></div>
<div class="abs" style="left:436px;top:772px;width:58px;height:4px;background:#cfe3f3;border-radius:2px 2px 0 0"></div>
</body></html>
